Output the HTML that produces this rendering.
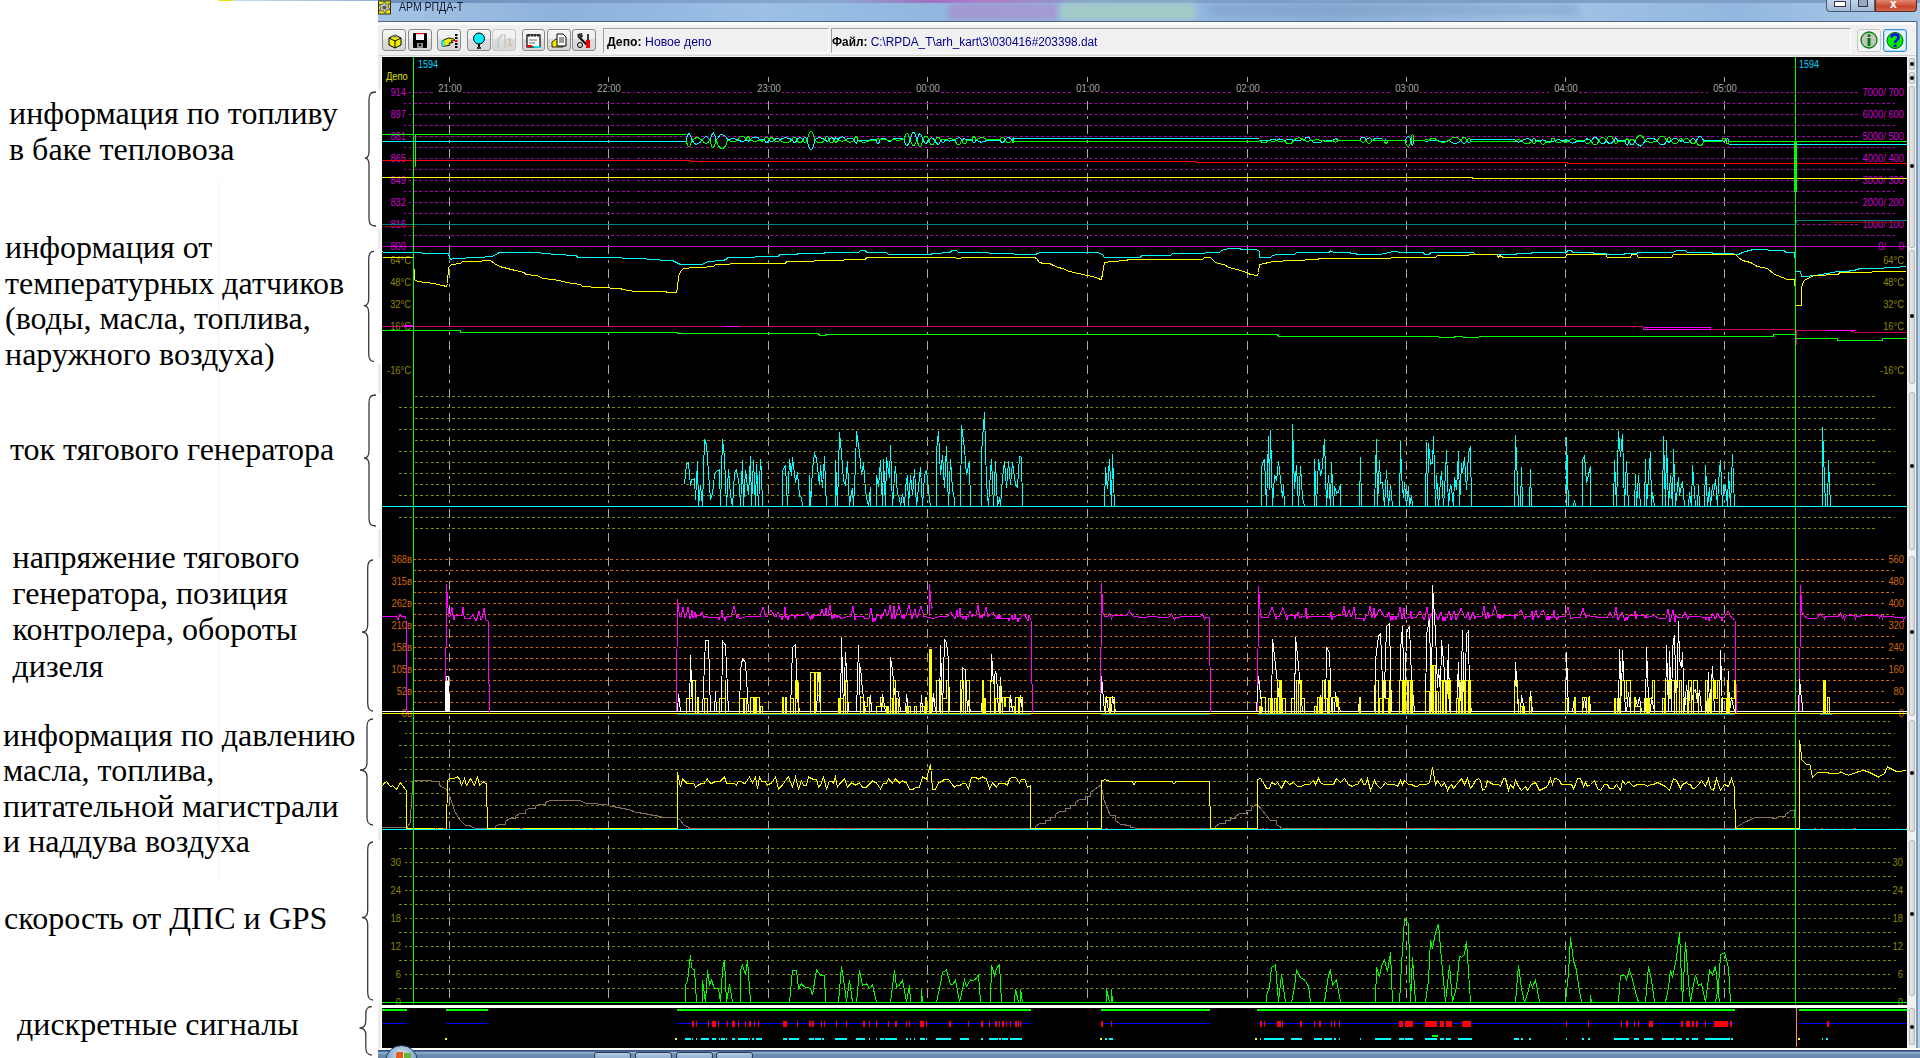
<!DOCTYPE html>
<html><head><meta charset="utf-8"><style>
html,body{margin:0;padding:0;width:1920px;height:1058px;overflow:hidden;background:#fff;position:relative}
.ann{position:absolute;font-family:"Liberation Serif",serif;font-size:32px;line-height:1;white-space:nowrap;color:#000}
</style></head><body>
<div style="position:absolute;left:233px;top:0;width:145px;height:1px;background:linear-gradient(90deg,#c8dcf0,#8fb0d8)"></div>
<div style="position:absolute;left:219px;top:0;width:14px;height:1px;background:#e8e000"></div>
<div style="position:absolute;left:218px;top:180px;width:1px;height:700px;background:#f4f4f4"></div><div id="title" style="position:absolute;left:378px;top:0;width:1542px;height:21px;overflow:hidden;
background:linear-gradient(90deg,#a6c3e3 0%,#8db3dc 12%,#9cc0e6 25%,#8fb6de 38%,#95bbe2 50%,#8cb1d8 62%,#a3c4e6 75%,#92b8df 88%,#a9c8e8 100%)">
<div style="position:absolute;left:0;top:0;width:100%;height:3px;background:linear-gradient(90deg,#6d90bb,#88a8d0 30%,#a070c0 36%,#b07ac8 40%,#7fa0c8 46%,#7d9ec6 100%)"></div>
<div style="position:absolute;left:570px;top:3px;width:110px;height:17px;background:#a892d0;filter:blur(3px);opacity:.8"></div>
<div style="position:absolute;left:682px;top:3px;width:135px;height:17px;background:#a8cfc0;filter:blur(3px);opacity:.8"></div>
<div style="position:absolute;left:830px;top:5px;width:370px;height:10px;background:#6f8fb8;filter:blur(4px);opacity:.45"></div>
</div><svg style="position:absolute;left:378px;top:0" width="14" height="15"><rect x="0.5" y="1" width="12" height="13" fill="#f0e800" stroke="#303010" stroke-width="1"/><path d="M6.5,1.5 L8,4.5 11.5,3.5 10,7 12,9.5 8.5,10 7,13.5 5,10.5 1.5,11 3,7.5 1,4.5 4.5,4.5Z" fill="#c8c8c8" stroke="#404040" stroke-width="0.8"/><circle cx="6.5" cy="7.5" r="2" fill="#555"/></svg>
<div style="position:absolute;left:399px;top:0px;font:12px 'Liberation Sans',sans-serif;color:#101830;line-height:14px;transform:scaleX(0.875);transform-origin:0 0">АРМ РПДА-Т</div><div style="position:absolute;left:1826px;top:0;width:25px;height:12px;background:linear-gradient(#c4d6ea,#9fb8d4);border:1px solid #4a5c74;border-top:none;border-radius:0 0 0 4px;box-sizing:border-box"></div>
<div style="position:absolute;left:1834px;top:1px;width:10px;height:4px;background:#fff;border:1px solid #334"></div>
<div style="position:absolute;left:1851px;top:0;width:24px;height:12px;background:linear-gradient(#c4d6ea,#9fb8d4);border:1px solid #4a5c74;border-top:none;border-left:none;box-sizing:border-box"></div>
<div style="position:absolute;left:1858px;top:-2px;width:8px;height:7px;background:#9ab;border:1px solid #334"></div>
<div style="position:absolute;left:1875px;top:0;width:42px;height:12px;background:linear-gradient(#e08870,#c8442c 60%,#d06850);border:1px solid #5a2a20;border-top:none;border-radius:0 0 4px 0;box-sizing:border-box"></div>
<div style="position:absolute;left:1890px;top:-3px;font:bold 12px 'Liberation Sans',sans-serif;color:#fff">x</div><div style="position:absolute;left:378px;top:21px;width:1539px;height:1px;background:#4e627a"></div>
<div style="position:absolute;left:378px;top:22px;width:1538px;height:1029px;background:#f0f0f0"></div>
<div style="position:absolute;left:378px;top:22px;width:1538px;height:3px;background:#fbfbfb"></div>
<div style="position:absolute;left:1916px;top:21px;width:2px;height:1030px;background:#8098b4"></div>
<div style="position:absolute;left:1918px;top:21px;width:2px;height:1030px;background:#b8d0ec"></div>
<div style="position:absolute;left:378px;top:55px;width:1538px;height:1px;background:#d0d0d0"></div><div style="position:absolute;left:382px;top:29px;width:24px;height:22px;box-sizing:border-box;border:1px solid #8a8a8a;border-radius:3px;background:linear-gradient(#f4f4f4 0%,#eeeeee 46%,#dddddd 47%,#d6d6d6 100%)"></div><div style="position:absolute;left:408px;top:29px;width:24px;height:22px;box-sizing:border-box;border:1px solid #8a8a8a;border-radius:3px;background:linear-gradient(#f4f4f4 0%,#eeeeee 46%,#dddddd 47%,#d6d6d6 100%)"></div><div style="position:absolute;left:437px;top:29px;width:24px;height:22px;box-sizing:border-box;border:1px solid #8a8a8a;border-radius:3px;background:linear-gradient(#f4f4f4 0%,#eeeeee 46%,#dddddd 47%,#d6d6d6 100%)"></div><div style="position:absolute;left:467px;top:29px;width:24px;height:22px;box-sizing:border-box;border:1px solid #8a8a8a;border-radius:3px;background:linear-gradient(#f4f4f4 0%,#eeeeee 46%,#dddddd 47%,#d6d6d6 100%)"></div><div style="position:absolute;left:492px;top:29px;width:24px;height:22px;box-sizing:border-box;border:1px solid #c8c8c8;border-radius:3px;background:linear-gradient(#f4f4f4 0%,#eeeeee 46%,#dddddd 47%,#d6d6d6 100%)"></div><div style="position:absolute;left:522px;top:29px;width:23px;height:22px;box-sizing:border-box;border:1px solid #8a8a8a;border-radius:3px;background:linear-gradient(#f4f4f4 0%,#eeeeee 46%,#dddddd 47%,#d6d6d6 100%)"></div><div style="position:absolute;left:547px;top:29px;width:24px;height:22px;box-sizing:border-box;border:1px solid #8a8a8a;border-radius:3px;background:linear-gradient(#f4f4f4 0%,#eeeeee 46%,#dddddd 47%,#d6d6d6 100%)"></div><div style="position:absolute;left:572px;top:29px;width:24px;height:22px;box-sizing:border-box;border:1px solid #8a8a8a;border-radius:3px;background:linear-gradient(#f4f4f4 0%,#eeeeee 46%,#dddddd 47%,#d6d6d6 100%)"></div><div style="position:absolute;left:1857px;top:29px;width:24px;height:23px;box-sizing:border-box;border:1px solid #c8c8c8;border-radius:3px;background:#f4f4f4"></div><div style="position:absolute;left:1883px;top:29px;width:24px;height:23px;box-sizing:border-box;border:1px solid #3c8cd8;border-radius:3px;background:#e4f2fc;box-shadow:inset 0 0 0 1px #a8dcf8"></div>
<svg style="position:absolute;left:0;top:0" width="1920" height="60">
<g transform="translate(387,32)"><path d="M2,6 L8,3 L14,6 L14,13 L8,16 L2,13Z" fill="#f0f000" stroke="#000" stroke-width="1"/><path d="M2,6 L8,9 L14,6 M8,9 V16" fill="none" stroke="#000"/><path d="M5,4.5 L8,3 11,4.5 8,6Z" fill="#888"/></g>
<g transform="translate(412,32)"><rect x="1" y="1" width="14" height="15" rx="1" fill="#000"/><rect x="4" y="1" width="8" height="7" fill="#fff"/><rect x="4" y="1" width="8" height="1.2" fill="#e00"/><rect x="5" y="11" width="6" height="5" fill="#888"/><rect x="7" y="12" width="2" height="2" fill="#000"/></g>
<g transform="translate(441,33)"><path d="M1,8 L5,6 8,5 13,6 14,7.5 10,8 12,9.5 8,10 9,12 5,13 1,13Z" fill="#f0f000" stroke="#000" stroke-width="0.9"/><rect x="0.5" y="7.5" width="3" height="5.5" fill="#30e0f0"/><rect x="14" y="1" width="2.5" height="2" fill="#000"/><rect x="14" y="4" width="2.5" height="2" fill="#000"/><rect x="14" y="7" width="2.5" height="2" fill="#f00"/><rect x="14" y="10" width="2.5" height="2" fill="#000"/><rect x="14" y="13" width="2.5" height="2" fill="#000"/></g>
<g transform="translate(472,32)"><circle cx="7" cy="6.5" r="5.5" fill="#00f0ff" stroke="#000" stroke-width="1"/><rect x="6" y="12" width="2" height="3" fill="#000"/><rect x="5" y="15" width="4" height="2" fill="#333"/></g>
<g transform="translate(497,33)"><path d="M1,15 V5 h3 V2 h4 V15" fill="none" stroke="#c0c0c0" stroke-width="1.2"/><text x="10" y="13" font-size="10" font-family="Liberation Sans" fill="#d0c0a8" font-weight="bold">1</text></g>
<g transform="translate(526,32)"><rect x="1" y="3" width="13" height="12" fill="#fff" stroke="#000" stroke-width="1.2"/><path d="M3,2v3M6,2v3M9,2v3M12,2v3" stroke="#000"/><path d="M3,8h8M3,11h6" stroke="#666"/><rect x="1" y="13" width="5" height="2" fill="#e00"/><rect x="8" y="14" width="6" height="2" fill="#0dd"/></g>
<g transform="translate(551,32)"><path d="M1,10 L5,7 h10 l-3,8 h-11z" fill="#f0f000" stroke="#000" stroke-width="0.8"/><path d="M6,2 h6 l3,3 v9 h-9z" fill="#fff" stroke="#000" stroke-width="1"/><path d="M8,6h5M8,8h5M8,10h5" stroke="#000" stroke-width="0.8"/></g>
<g transform="translate(576,32)"><path d="M2,4 L12,14" stroke="#000" stroke-width="2"/><path d="M1,2 l5,-1 1,4 -4,2z" fill="#333"/><rect x="10" y="8" width="4" height="8" fill="#e00"/><path d="M12,2v6" stroke="#000" stroke-width="1.5"/><circle cx="4" cy="13" r="2.5" fill="none" stroke="#000"/></g>
<g transform="translate(1860,31)"><circle cx="9" cy="9" r="8" fill="#c4c4c4" stroke="#008000" stroke-width="1.3"/><rect x="7.5" y="7" width="3" height="8" fill="#008000"/><circle cx="9" cy="4.5" r="1.6" fill="#008000"/></g>
<g transform="translate(1886,31)"><circle cx="9" cy="9.5" r="8" fill="#00f000" stroke="#006000" stroke-width="1"/><path d="M5.5,6.5 C5.5,2.5 12.5,2.5 12.5,6.5 C12.5,9 9,9 9,12" fill="none" stroke="#0000ff" stroke-width="2.5"/><rect x="7.5" y="13.5" width="3" height="2.5" fill="#0000ff"/></g>
</svg><div style="position:absolute;left:603px;top:28px;width:226px;height:25px;box-sizing:border-box;border-top:1px solid #a0a0a0;border-left:1px solid #a0a0a0;border-bottom:1px solid #fff;border-right:1px solid #fff"></div>
<div style="position:absolute;left:831px;top:28px;width:1020px;height:25px;box-sizing:border-box;border-top:1px solid #a0a0a0;border-left:1px solid #a0a0a0;border-bottom:1px solid #fff;border-right:1px solid #fff"></div>
<div style="position:absolute;left:607px;top:35px;font:12px 'Liberation Sans',sans-serif;line-height:14px;white-space:nowrap;transform:scaleX(1.02);transform-origin:0 0"><b style="color:#000">Депо:</b> <span style="color:#000090">Новое депо</span></div>
<div style="position:absolute;left:832px;top:35px;font:12px 'Liberation Sans',sans-serif;line-height:14px;white-space:nowrap;transform:scaleX(0.985);transform-origin:0 0"><b style="color:#000">Файл:</b> <span style="color:#000090">C:\RPDA_T\arh_kart\3\030416#203398.dat</span></div><svg style="position:absolute;left:0;top:0" width="1920" height="1058" shape-rendering="crispEdges">
<rect x="382" y="57" width="1525" height="991" fill="#000"/>
<g font-family="Liberation Sans" ><line x1="449.5" y1="77" x2="449.5" y2="1003" stroke="#a8a8a8" stroke-dasharray="9 6 3 6" stroke-dashoffset="0"/><line x1="608.5" y1="77" x2="608.5" y2="1003" stroke="#a8a8a8" stroke-dasharray="9 6 3 6" stroke-dashoffset="0"/><line x1="768.5" y1="77" x2="768.5" y2="1003" stroke="#a8a8a8" stroke-dasharray="9 6 3 6" stroke-dashoffset="0"/><line x1="927.5" y1="77" x2="927.5" y2="1003" stroke="#a8a8a8" stroke-dasharray="9 6 3 6" stroke-dashoffset="0"/><line x1="1087.5" y1="77" x2="1087.5" y2="1003" stroke="#a8a8a8" stroke-dasharray="9 6 3 6" stroke-dashoffset="0"/><line x1="1247.5" y1="77" x2="1247.5" y2="1003" stroke="#a8a8a8" stroke-dasharray="9 6 3 6" stroke-dashoffset="0"/><line x1="1406.5" y1="77" x2="1406.5" y2="1003" stroke="#a8a8a8" stroke-dasharray="9 6 3 6" stroke-dashoffset="0"/><line x1="1565.5" y1="77" x2="1565.5" y2="1003" stroke="#a8a8a8" stroke-dasharray="9 6 3 6" stroke-dashoffset="0"/><line x1="1724.5" y1="77" x2="1724.5" y2="1003" stroke="#a8a8a8" stroke-dasharray="9 6 3 6" stroke-dashoffset="0"/><line x1="409" y1="92.5" x2="1859" y2="92.5" stroke="#b000b8" stroke-dasharray="1.9938 2.9906 2.9906 1.9938 2.9906 2.9906" stroke-dashoffset="15.750"/><line x1="404" y1="103.5" x2="1895" y2="103.5" stroke="#b000b8" stroke-dasharray="1.9938 2.9906 2.9906 1.9938 2.9906 2.9906" stroke-dashoffset="10.750"/><line x1="409" y1="114.5" x2="1859" y2="114.5" stroke="#b000b8" stroke-dasharray="1.9938 2.9906 2.9906 1.9938 2.9906 2.9906" stroke-dashoffset="15.750"/><line x1="404" y1="125.5" x2="1895" y2="125.5" stroke="#b000b8" stroke-dasharray="1.9938 2.9906 2.9906 1.9938 2.9906 2.9906" stroke-dashoffset="10.750"/><line x1="409" y1="136.5" x2="1859" y2="136.5" stroke="#b000b8" stroke-dasharray="1.9938 2.9906 2.9906 1.9938 2.9906 2.9906" stroke-dashoffset="15.750"/><line x1="404" y1="147.5" x2="1895" y2="147.5" stroke="#b000b8" stroke-dasharray="1.9938 2.9906 2.9906 1.9938 2.9906 2.9906" stroke-dashoffset="10.750"/><line x1="409" y1="158.5" x2="1859" y2="158.5" stroke="#b000b8" stroke-dasharray="1.9938 2.9906 2.9906 1.9938 2.9906 2.9906" stroke-dashoffset="15.750"/><line x1="404" y1="169.5" x2="1895" y2="169.5" stroke="#b000b8" stroke-dasharray="1.9938 2.9906 2.9906 1.9938 2.9906 2.9906" stroke-dashoffset="10.750"/><line x1="409" y1="180.5" x2="1859" y2="180.5" stroke="#b000b8" stroke-dasharray="1.9938 2.9906 2.9906 1.9938 2.9906 2.9906" stroke-dashoffset="15.750"/><line x1="404" y1="191.5" x2="1895" y2="191.5" stroke="#b000b8" stroke-dasharray="1.9938 2.9906 2.9906 1.9938 2.9906 2.9906" stroke-dashoffset="10.750"/><line x1="409" y1="202.5" x2="1859" y2="202.5" stroke="#b000b8" stroke-dasharray="1.9938 2.9906 2.9906 1.9938 2.9906 2.9906" stroke-dashoffset="15.750"/><line x1="404" y1="213.5" x2="1895" y2="213.5" stroke="#b000b8" stroke-dasharray="1.9938 2.9906 2.9906 1.9938 2.9906 2.9906" stroke-dashoffset="10.750"/><line x1="409" y1="224.5" x2="1859" y2="224.5" stroke="#b000b8" stroke-dasharray="1.9938 2.9906 2.9906 1.9938 2.9906 2.9906" stroke-dashoffset="15.750"/><line x1="404" y1="235.5" x2="1895" y2="235.5" stroke="#b000b8" stroke-dasharray="1.9938 2.9906 2.9906 1.9938 2.9906 2.9906" stroke-dashoffset="10.750"/><rect x="382" y="246" width="1525" height="1" fill="#b000b8"/><line x1="415" y1="396.5" x2="1877" y2="396.5" stroke="#8c8800" stroke-dasharray="1.9938 2.9906 2.9906 1.9938 2.9906 2.9906" stroke-dashoffset="4.800"/><line x1="399" y1="407.5" x2="1895" y2="407.5" stroke="#8c8800" stroke-dasharray="1.9938 2.9906 2.9906 1.9938 2.9906 2.9906" stroke-dashoffset="4.750"/><line x1="415" y1="418.5" x2="1877" y2="418.5" stroke="#8c8800" stroke-dasharray="1.9938 2.9906 2.9906 1.9938 2.9906 2.9906" stroke-dashoffset="4.800"/><line x1="399" y1="429.5" x2="1895" y2="429.5" stroke="#8c8800" stroke-dasharray="1.9938 2.9906 2.9906 1.9938 2.9906 2.9906" stroke-dashoffset="4.750"/><line x1="415" y1="440.5" x2="1877" y2="440.5" stroke="#8c8800" stroke-dasharray="1.9938 2.9906 2.9906 1.9938 2.9906 2.9906" stroke-dashoffset="4.800"/><line x1="399" y1="451.5" x2="1895" y2="451.5" stroke="#8c8800" stroke-dasharray="1.9938 2.9906 2.9906 1.9938 2.9906 2.9906" stroke-dashoffset="4.750"/><line x1="415" y1="462.5" x2="1877" y2="462.5" stroke="#8c8800" stroke-dasharray="1.9938 2.9906 2.9906 1.9938 2.9906 2.9906" stroke-dashoffset="4.800"/><line x1="399" y1="473.5" x2="1895" y2="473.5" stroke="#8c8800" stroke-dasharray="1.9938 2.9906 2.9906 1.9938 2.9906 2.9906" stroke-dashoffset="4.750"/><line x1="415" y1="484.5" x2="1877" y2="484.5" stroke="#8c8800" stroke-dasharray="1.9938 2.9906 2.9906 1.9938 2.9906 2.9906" stroke-dashoffset="4.800"/><line x1="399" y1="495.5" x2="1895" y2="495.5" stroke="#8c8800" stroke-dasharray="1.9938 2.9906 2.9906 1.9938 2.9906 2.9906" stroke-dashoffset="4.750"/><line x1="399" y1="517.5" x2="1895" y2="517.5" stroke="#8c8800" stroke-dasharray="1.9938 2.9906 2.9906 1.9938 2.9906 2.9906" stroke-dashoffset="4.750"/><line x1="415" y1="528.5" x2="1877" y2="528.5" stroke="#8c8800" stroke-dasharray="1.9938 2.9906 2.9906 1.9938 2.9906 2.9906" stroke-dashoffset="4.800"/><line x1="414" y1="559.5" x2="1884" y2="559.5" stroke="#d06800" stroke-dasharray="1.9938 2.9906 2.9906 1.9938 2.9906 2.9906" stroke-dashoffset="5.800"/><line x1="414" y1="570.5" x2="1894" y2="570.5" stroke="#d06800" stroke-dasharray="1.9938 2.9906 2.9906 1.9938 2.9906 2.9906" stroke-dashoffset="5.800"/><line x1="414" y1="581.5" x2="1884" y2="581.5" stroke="#d06800" stroke-dasharray="1.9938 2.9906 2.9906 1.9938 2.9906 2.9906" stroke-dashoffset="5.800"/><line x1="414" y1="592.5" x2="1894" y2="592.5" stroke="#d06800" stroke-dasharray="1.9938 2.9906 2.9906 1.9938 2.9906 2.9906" stroke-dashoffset="5.800"/><line x1="414" y1="603.5" x2="1884" y2="603.5" stroke="#d06800" stroke-dasharray="1.9938 2.9906 2.9906 1.9938 2.9906 2.9906" stroke-dashoffset="5.800"/><line x1="414" y1="614.5" x2="1894" y2="614.5" stroke="#d06800" stroke-dasharray="1.9938 2.9906 2.9906 1.9938 2.9906 2.9906" stroke-dashoffset="5.800"/><line x1="414" y1="625.5" x2="1884" y2="625.5" stroke="#d06800" stroke-dasharray="1.9938 2.9906 2.9906 1.9938 2.9906 2.9906" stroke-dashoffset="5.800"/><line x1="414" y1="636.5" x2="1894" y2="636.5" stroke="#d06800" stroke-dasharray="1.9938 2.9906 2.9906 1.9938 2.9906 2.9906" stroke-dashoffset="5.800"/><line x1="414" y1="647.5" x2="1884" y2="647.5" stroke="#d06800" stroke-dasharray="1.9938 2.9906 2.9906 1.9938 2.9906 2.9906" stroke-dashoffset="5.800"/><line x1="414" y1="658.5" x2="1894" y2="658.5" stroke="#d06800" stroke-dasharray="1.9938 2.9906 2.9906 1.9938 2.9906 2.9906" stroke-dashoffset="5.800"/><line x1="414" y1="669.5" x2="1884" y2="669.5" stroke="#d06800" stroke-dasharray="1.9938 2.9906 2.9906 1.9938 2.9906 2.9906" stroke-dashoffset="5.800"/><line x1="414" y1="680.5" x2="1894" y2="680.5" stroke="#d06800" stroke-dasharray="1.9938 2.9906 2.9906 1.9938 2.9906 2.9906" stroke-dashoffset="5.800"/><line x1="414" y1="691.5" x2="1884" y2="691.5" stroke="#d06800" stroke-dasharray="1.9938 2.9906 2.9906 1.9938 2.9906 2.9906" stroke-dashoffset="5.800"/><line x1="414" y1="702.5" x2="1894" y2="702.5" stroke="#d06800" stroke-dasharray="1.9938 2.9906 2.9906 1.9938 2.9906 2.9906" stroke-dashoffset="5.800"/><line x1="399" y1="721.5" x2="1890" y2="721.5" stroke="#8c8800" stroke-dasharray="1.9938 2.9906 2.9906 1.9938 2.9906 2.9906" stroke-dashoffset="4.750"/><line x1="405" y1="733.5" x2="1895" y2="733.5" stroke="#8c8800" stroke-dasharray="1.9938 2.9906 2.9906 1.9938 2.9906 2.9906" stroke-dashoffset="10.750"/><line x1="399" y1="745.5" x2="1890" y2="745.5" stroke="#8c8800" stroke-dasharray="1.9938 2.9906 2.9906 1.9938 2.9906 2.9906" stroke-dashoffset="4.750"/><line x1="405" y1="757.5" x2="1895" y2="757.5" stroke="#8c8800" stroke-dasharray="1.9938 2.9906 2.9906 1.9938 2.9906 2.9906" stroke-dashoffset="10.750"/><line x1="399" y1="769.5" x2="1890" y2="769.5" stroke="#8c8800" stroke-dasharray="1.9938 2.9906 2.9906 1.9938 2.9906 2.9906" stroke-dashoffset="4.750"/><line x1="405" y1="781.5" x2="1895" y2="781.5" stroke="#8c8800" stroke-dasharray="1.9938 2.9906 2.9906 1.9938 2.9906 2.9906" stroke-dashoffset="10.750"/><line x1="399" y1="793.5" x2="1890" y2="793.5" stroke="#8c8800" stroke-dasharray="1.9938 2.9906 2.9906 1.9938 2.9906 2.9906" stroke-dashoffset="4.750"/><line x1="405" y1="805.5" x2="1895" y2="805.5" stroke="#8c8800" stroke-dasharray="1.9938 2.9906 2.9906 1.9938 2.9906 2.9906" stroke-dashoffset="10.750"/><line x1="399" y1="817.5" x2="1890" y2="817.5" stroke="#8c8800" stroke-dasharray="1.9938 2.9906 2.9906 1.9938 2.9906 2.9906" stroke-dashoffset="4.750"/><line x1="399" y1="848.5" x2="1897" y2="848.5" stroke="#8c8800" stroke-dasharray="1.9938 2.9906 2.9906 1.9938 2.9906 2.9906" stroke-dashoffset="4.750"/><line x1="405" y1="862.5" x2="1890" y2="862.5" stroke="#8c8800" stroke-dasharray="1.9938 2.9906 2.9906 1.9938 2.9906 2.9906" stroke-dashoffset="10.750"/><line x1="399" y1="876.5" x2="1897" y2="876.5" stroke="#8c8800" stroke-dasharray="1.9938 2.9906 2.9906 1.9938 2.9906 2.9906" stroke-dashoffset="4.750"/><line x1="405" y1="890.5" x2="1890" y2="890.5" stroke="#8c8800" stroke-dasharray="1.9938 2.9906 2.9906 1.9938 2.9906 2.9906" stroke-dashoffset="10.750"/><line x1="399" y1="904.5" x2="1897" y2="904.5" stroke="#8c8800" stroke-dasharray="1.9938 2.9906 2.9906 1.9938 2.9906 2.9906" stroke-dashoffset="4.750"/><line x1="405" y1="918.5" x2="1890" y2="918.5" stroke="#8c8800" stroke-dasharray="1.9938 2.9906 2.9906 1.9938 2.9906 2.9906" stroke-dashoffset="10.750"/><line x1="399" y1="932.5" x2="1897" y2="932.5" stroke="#8c8800" stroke-dasharray="1.9938 2.9906 2.9906 1.9938 2.9906 2.9906" stroke-dashoffset="4.750"/><line x1="405" y1="946.5" x2="1890" y2="946.5" stroke="#8c8800" stroke-dasharray="1.9938 2.9906 2.9906 1.9938 2.9906 2.9906" stroke-dashoffset="10.750"/><line x1="399" y1="960.5" x2="1897" y2="960.5" stroke="#8c8800" stroke-dasharray="1.9938 2.9906 2.9906 1.9938 2.9906 2.9906" stroke-dashoffset="4.750"/><line x1="405" y1="974.5" x2="1890" y2="974.5" stroke="#8c8800" stroke-dasharray="1.9938 2.9906 2.9906 1.9938 2.9906 2.9906" stroke-dashoffset="10.750"/><line x1="399" y1="988.5" x2="1897" y2="988.5" stroke="#8c8800" stroke-dasharray="1.9938 2.9906 2.9906 1.9938 2.9906 2.9906" stroke-dashoffset="4.750"/><rect x="433" y="82" width="30" height="17" fill="#000"/><text transform="translate(450,92) scale(0.85,1)" fill="#a8a8a8" text-anchor="middle" font-size="11">21:00</text><rect x="592" y="82" width="30" height="17" fill="#000"/><text transform="translate(609,92) scale(0.85,1)" fill="#a8a8a8" text-anchor="middle" font-size="11">22:00</text><rect x="752" y="82" width="30" height="17" fill="#000"/><text transform="translate(769,92) scale(0.85,1)" fill="#a8a8a8" text-anchor="middle" font-size="11">23:00</text><rect x="911" y="82" width="30" height="17" fill="#000"/><text transform="translate(928,92) scale(0.85,1)" fill="#a8a8a8" text-anchor="middle" font-size="11">00:00</text><rect x="1071" y="82" width="30" height="17" fill="#000"/><text transform="translate(1088,92) scale(0.85,1)" fill="#a8a8a8" text-anchor="middle" font-size="11">01:00</text><rect x="1231" y="82" width="30" height="17" fill="#000"/><text transform="translate(1248,92) scale(0.85,1)" fill="#a8a8a8" text-anchor="middle" font-size="11">02:00</text><rect x="1390" y="82" width="30" height="17" fill="#000"/><text transform="translate(1407,92) scale(0.85,1)" fill="#a8a8a8" text-anchor="middle" font-size="11">03:00</text><rect x="1549" y="82" width="30" height="17" fill="#000"/><text transform="translate(1566,92) scale(0.85,1)" fill="#a8a8a8" text-anchor="middle" font-size="11">04:00</text><rect x="1708" y="82" width="30" height="17" fill="#000"/><text transform="translate(1725,92) scale(0.85,1)" fill="#a8a8a8" text-anchor="middle" font-size="11">05:00</text><text transform="translate(386,80) scale(0.85,1)" fill="#e0e000" text-anchor="start" font-size="11">Депо</text><text transform="translate(418,68) scale(0.9,1)" fill="#00d8ff" text-anchor="start" font-size="10">1594</text><text transform="translate(1799,68) scale(0.9,1)" fill="#00d8ff" text-anchor="start" font-size="10">1594</text><text transform="translate(406,96) scale(0.85,1)" fill="#d000d0" text-anchor="end" font-size="11">914</text><text transform="translate(406,118) scale(0.85,1)" fill="#d000d0" text-anchor="end" font-size="11">897</text><text transform="translate(406,140) scale(0.85,1)" fill="#d000d0" text-anchor="end" font-size="11">881</text><text transform="translate(406,162) scale(0.85,1)" fill="#d000d0" text-anchor="end" font-size="11">865</text><text transform="translate(406,184) scale(0.85,1)" fill="#d000d0" text-anchor="end" font-size="11">849</text><text transform="translate(406,206) scale(0.85,1)" fill="#d000d0" text-anchor="end" font-size="11">832</text><text transform="translate(406,228) scale(0.85,1)" fill="#d000d0" text-anchor="end" font-size="11">816</text><text transform="translate(406,250) scale(0.85,1)" fill="#d000d0" text-anchor="end" font-size="11">800</text><text transform="translate(1904,96) scale(0.85,1)" fill="#d000d0" text-anchor="end" font-size="11">7000/ 700</text><text transform="translate(1904,118) scale(0.85,1)" fill="#d000d0" text-anchor="end" font-size="11">6000/ 600</text><text transform="translate(1904,140) scale(0.85,1)" fill="#d000d0" text-anchor="end" font-size="11">5000/ 500</text><text transform="translate(1904,162) scale(0.85,1)" fill="#d000d0" text-anchor="end" font-size="11">4000/ 400</text><text transform="translate(1904,184) scale(0.85,1)" fill="#d000d0" text-anchor="end" font-size="11">3000/ 300</text><text transform="translate(1904,206) scale(0.85,1)" fill="#d000d0" text-anchor="end" font-size="11">2000/ 200</text><text transform="translate(1904,228) scale(0.85,1)" fill="#d000d0" text-anchor="end" font-size="11">1000/ 100</text><text transform="translate(1904,250) scale(0.85,1)" fill="#d000d0" text-anchor="end" font-size="11">0</text><text transform="translate(1886,250) scale(0.85,1)" fill="#d000d0" text-anchor="end" font-size="11">0/</text><text transform="translate(411,264) scale(0.85,1)" fill="#8c8800" text-anchor="end" font-size="11">64°C</text><text transform="translate(1904,264) scale(0.85,1)" fill="#8c8800" text-anchor="end" font-size="11">64°C</text><text transform="translate(411,286) scale(0.85,1)" fill="#8c8800" text-anchor="end" font-size="11">48°C</text><text transform="translate(1904,286) scale(0.85,1)" fill="#8c8800" text-anchor="end" font-size="11">48°C</text><text transform="translate(411,308) scale(0.85,1)" fill="#8c8800" text-anchor="end" font-size="11">32°C</text><text transform="translate(1904,308) scale(0.85,1)" fill="#8c8800" text-anchor="end" font-size="11">32°C</text><text transform="translate(411,330) scale(0.85,1)" fill="#8c8800" text-anchor="end" font-size="11">16°C</text><text transform="translate(1904,330) scale(0.85,1)" fill="#8c8800" text-anchor="end" font-size="11">16°C</text><text transform="translate(411,374) scale(0.85,1)" fill="#8c8800" text-anchor="end" font-size="11">-16°C</text><text transform="translate(1904,374) scale(0.85,1)" fill="#8c8800" text-anchor="end" font-size="11">-16°C</text><text transform="translate(412,563) scale(0.85,1)" fill="#d06800" text-anchor="end" font-size="11">368в</text><text transform="translate(1904,563) scale(0.85,1)" fill="#d06800" text-anchor="end" font-size="11">560</text><text transform="translate(412,585) scale(0.85,1)" fill="#d06800" text-anchor="end" font-size="11">315в</text><text transform="translate(1904,585) scale(0.85,1)" fill="#d06800" text-anchor="end" font-size="11">480</text><text transform="translate(412,607) scale(0.85,1)" fill="#d06800" text-anchor="end" font-size="11">262в</text><text transform="translate(1904,607) scale(0.85,1)" fill="#d06800" text-anchor="end" font-size="11">400</text><text transform="translate(412,629) scale(0.85,1)" fill="#d06800" text-anchor="end" font-size="11">210в</text><text transform="translate(1904,629) scale(0.85,1)" fill="#d06800" text-anchor="end" font-size="11">320</text><text transform="translate(412,651) scale(0.85,1)" fill="#d06800" text-anchor="end" font-size="11">158в</text><text transform="translate(1904,651) scale(0.85,1)" fill="#d06800" text-anchor="end" font-size="11">240</text><text transform="translate(412,673) scale(0.85,1)" fill="#d06800" text-anchor="end" font-size="11">105в</text><text transform="translate(1904,673) scale(0.85,1)" fill="#d06800" text-anchor="end" font-size="11">160</text><text transform="translate(412,695) scale(0.85,1)" fill="#d06800" text-anchor="end" font-size="11">52в</text><text transform="translate(1904,695) scale(0.85,1)" fill="#d06800" text-anchor="end" font-size="11">80</text><text transform="translate(412,717) scale(0.85,1)" fill="#d06800" text-anchor="end" font-size="11">0в</text><text transform="translate(1904,717) scale(0.85,1)" fill="#d06800" text-anchor="end" font-size="11">0</text><text transform="translate(401,866) scale(0.85,1)" fill="#8c8800" text-anchor="end" font-size="11">30</text><text transform="translate(1903,866) scale(0.85,1)" fill="#8c8800" text-anchor="end" font-size="11">30</text><text transform="translate(401,894) scale(0.85,1)" fill="#8c8800" text-anchor="end" font-size="11">24</text><text transform="translate(1903,894) scale(0.85,1)" fill="#8c8800" text-anchor="end" font-size="11">24</text><text transform="translate(401,922) scale(0.85,1)" fill="#8c8800" text-anchor="end" font-size="11">18</text><text transform="translate(1903,922) scale(0.85,1)" fill="#8c8800" text-anchor="end" font-size="11">18</text><text transform="translate(401,950) scale(0.85,1)" fill="#8c8800" text-anchor="end" font-size="11">12</text><text transform="translate(1903,950) scale(0.85,1)" fill="#8c8800" text-anchor="end" font-size="11">12</text><text transform="translate(401,978) scale(0.85,1)" fill="#8c8800" text-anchor="end" font-size="11">6</text><text transform="translate(1903,978) scale(0.85,1)" fill="#8c8800" text-anchor="end" font-size="11">6</text><text transform="translate(401,1006) scale(0.85,1)" fill="#8c8800" text-anchor="end" font-size="11">0</text><text transform="translate(1903,1006) scale(0.85,1)" fill="#8c8800" text-anchor="end" font-size="11">0</text></g>
<g shape-rendering="crispEdges"><rect x="382" y="506" width="1525" height="1" fill="#00ffff"/><polyline points="684.5,483.8 686.5,463.8 688.5,462.5 690.5,486.2 691.5,480.0 694.5,478.8 695.5,500.0 697.5,461.2 698.5,506.5 700.5,485.0 702.5,506.5 704.5,438.8 706.5,445.0 708.5,472.5 710.5,500.0 712.5,493.9 714.5,475.0 716.5,471.2 719.5,470.0 720.5,506.5 722.5,438.8 724.5,457.5 726.5,506.5 728.5,468.8 730.5,495.0 732.5,506.5 734.5,472.5 736.5,470.0 739.5,486.2 740.5,506.5 742.5,460.0 743.5,506.5 745.5,470.0 748.5,495.0 750.5,456.2 751.5,506.5 753.5,460.0 755.5,506.5 756.5,463.8 758.5,506.5 760.5,458.8 761.5,472.5 762.5,506.2" fill="none" stroke="#00ffff" stroke-width="1" stroke-linejoin="miter" /><polyline points="782.5,506.2 782.5,471.2 785.5,465.0 787.5,506.5 789.5,458.8 791.5,475.6 792.5,457.5 795.5,482.5 797.5,472.5 799.5,496.2 801.5,497.5 802.5,506.2" fill="none" stroke="#00ffff" stroke-width="1" stroke-linejoin="miter" /><polyline points="809.5,506.2 809.5,475.0 810.5,506.5 812.5,468.5 814.5,453.8 816.5,458.8 819.5,485.0 820.5,465.0 822.5,487.6 824.5,456.2 825.5,485.0 826.5,506.2" fill="none" stroke="#00ffff" stroke-width="1" stroke-linejoin="miter" /><polyline points="835.5,506.2 835.5,460.0 837.5,506.5 839.5,432.5 841.5,452.5 843.5,481.0 845.5,485.0 847.5,461.2 849.5,506.2 850.5,498.0 852.5,487.9 853.5,506.5 855.5,465.0 856.5,431.2 859.5,452.5 861.5,475.0 863.5,462.5 865.5,490.3 866.5,497.5 868.5,506.5 870.5,487.5 870.5,506.2" fill="none" stroke="#00ffff" stroke-width="1" stroke-linejoin="miter" /><polyline points="876.5,506.2 876.5,475.0 878.5,486.5 880.5,460.0 882.5,506.5 883.5,458.8 885.5,506.5 886.5,457.5 889.5,477.5 890.5,445.0 892.5,506.5 894.5,476.1 895.5,466.2 897.5,494.5 899.5,497.5 900.5,506.5 902.5,493.8 904.5,506.5 905.5,487.5 907.5,475.0 908.5,506.5 910.5,475.0 912.5,494.7 913.5,483.0 914.5,468.8 916.5,506.5 918.5,487.5 920.5,467.5 922.5,506.5 924.5,475.0 926.5,470.0 929.5,500.0 930.5,506.2" fill="none" stroke="#00ffff" stroke-width="1" stroke-linejoin="miter" /><polyline points="936.5,506.2 936.5,451.2 938.5,431.2 940.5,475.0 942.5,455.0 944.5,487.8 946.5,446.2 948.5,506.5 950.5,458.8 952.5,489.1 954.5,500.0 954.5,506.2 960.5,506.2 961.5,425.0 964.5,448.8 966.5,475.0 969.5,461.2 970.5,506.2 981.5,506.2 981.5,452.5 984.5,412.5 986.5,482.5 988.5,506.5 990.5,471.0 991.5,458.8 993.5,506.5 995.5,461.2 997.5,506.5 999.5,497.5 1000.5,506.5 1002.5,478.3 1004.5,461.2 1006.5,487.8 1008.5,461.2 1010.5,485.0 1012.5,462.5 1015.5,485.0 1017.5,487.0 1019.5,456.2 1021.5,457.5 1022.5,506.2" fill="none" stroke="#00ffff" stroke-width="1" stroke-linejoin="miter" /><polyline points="1104.5,506.2 1105.5,467.5 1107.5,489.0 1109.5,458.8 1111.5,506.5 1112.5,453.8 1114.5,506.2" fill="none" stroke="#00ffff" stroke-width="1" stroke-linejoin="miter" /><polyline points="1261.5,506.2 1261.5,467.5 1264.5,458.8 1266.5,506.5 1268.5,436.2 1269.5,489.8 1270.5,430.0 1272.5,506.5 1274.5,475.0 1276.5,480.8 1278.5,461.2 1280.5,480.0 1282.5,497.5 1283.5,485.0 1284.5,506.2" fill="none" stroke="#00ffff" stroke-width="1" stroke-linejoin="miter" /><polyline points="1292.5,506.2 1292.5,423.8 1294.5,488.5 1296.5,465.0 1298.5,506.5 1300.5,466.2 1302.5,497.5 1304.5,506.2" fill="none" stroke="#00ffff" stroke-width="1" stroke-linejoin="miter" /><polyline points="1314.5,506.2 1314.5,458.8 1316.5,506.5 1318.5,458.8 1320.5,475.0 1321.5,473.5 1322.5,465.0 1324.5,438.8 1326.5,506.5 1328.5,475.0 1330.5,506.5 1331.5,462.5 1333.5,506.5 1334.5,486.2 1336.5,493.1 1338.5,492.0 1340.5,483.8 1340.5,506.2" fill="none" stroke="#00ffff" stroke-width="1" stroke-linejoin="miter" /><polyline points="1359.5,506.2 1360.5,457.5 1361.5,506.2" fill="none" stroke="#00ffff" stroke-width="1" stroke-linejoin="miter" /><polyline points="1374.5,506.2 1376.5,438.8 1377.5,506.5 1379.5,460.0 1380.5,483.2 1382.5,482.5 1384.5,506.5 1386.5,470.0 1388.5,506.5 1390.5,485.0 1392.5,506.2" fill="none" stroke="#00ffff" stroke-width="1" stroke-linejoin="miter" /><polyline points="1399.5,506.2 1400.5,441.2 1401.5,475.0 1403.5,498.2 1404.5,482.2 1406.5,506.5 1408.5,486.2 1409.5,506.5 1411.5,495.0 1412.5,506.2" fill="none" stroke="#00ffff" stroke-width="1" stroke-linejoin="miter" /><polyline points="1425.5,506.2 1426.5,442.5 1427.5,506.5 1428.5,443.5 1430.5,464.2 1432.5,463.1 1433.5,436.2 1435.5,506.5 1436.5,475.0 1438.5,506.5 1440.5,480.4 1441.5,471.2 1443.5,506.5 1445.5,473.5 1446.5,450.0 1448.5,506.5 1450.5,483.9 1451.5,488.8 1453.5,506.5 1454.5,477.1 1456.5,490.2 1458.5,451.2 1459.5,506.5 1461.5,463.3 1462.5,472.5 1464.5,457.5 1466.5,490.1 1468.5,453.2 1470.5,446.2 1471.5,506.2" fill="none" stroke="#00ffff" stroke-width="1" stroke-linejoin="miter" /><polyline points="1514.5,506.2 1515.5,435.0 1518.5,506.2 1520.5,506.2 1521.5,467.5 1522.5,506.2 1529.5,506.2 1530.5,468.8 1531.5,506.2" fill="none" stroke="#00ffff" stroke-width="1" stroke-linejoin="miter" /><polyline points="1566.5,506.2 1566.5,437.5 1568.5,506.2 1573.5,506.2 1574.5,500.0 1575.5,506.2 1582.5,506.2 1582.5,460.0 1584.5,456.2 1586.5,482.9 1588.5,474.7 1590.5,466.2 1590.5,506.2" fill="none" stroke="#00ffff" stroke-width="1" stroke-linejoin="miter" /><polyline points="1613.5,506.2 1614.5,460.0 1616.5,506.5 1618.5,431.2 1620.5,457.0 1622.5,433.8 1624.5,506.5 1626.5,461.2 1628.5,506.5 1630.5,506.2 1634.5,506.2 1635.5,473.8 1636.5,506.5 1638.5,475.0 1640.5,506.2 1644.5,506.2 1645.5,458.8 1646.5,506.5 1648.5,476.7 1650.5,452.5 1651.5,506.5 1652.5,492.5 1654.5,506.2 1662.5,506.2 1663.5,436.2 1665.5,506.5 1666.5,440.0 1668.5,506.5 1670.5,475.0 1672.5,506.5 1673.5,448.8 1675.5,506.5 1678.5,477.5 1679.5,495.6 1680.5,490.2 1682.5,481.2 1684.5,506.2 1688.5,506.2 1689.5,492.5 1691.5,506.5 1692.5,465.0 1695.5,506.2 1697.5,506.2 1698.5,485.0 1699.5,506.5 1701.5,506.2 1704.5,506.2 1705.5,465.0 1707.5,506.5 1709.5,487.5 1710.5,506.5 1712.5,484.7 1713.5,494.6 1715.5,478.8 1717.5,506.5 1718.5,482.8 1720.5,460.0 1722.5,506.5 1723.5,485.5 1725.5,485.0 1727.5,506.5 1728.5,472.2 1730.5,506.5 1732.5,453.8 1734.5,506.2" fill="none" stroke="#00ffff" stroke-width="1" stroke-linejoin="miter" /><polyline points="1822.5,506.2 1822.5,427.5 1825.5,506.2 1827.5,506.2 1828.5,460.0 1830.5,506.2" fill="none" stroke="#00ffff" stroke-width="1" stroke-linejoin="miter" /><polyline points="382.0,160.5 690.0,160.5 691.0,161.5 1196.0,161.5 1197.0,162.5 1567.0,162.5 1568.0,163.5 1907.0,163.5" fill="none" stroke="#ff0000" stroke-width="1" stroke-linejoin="miter" /><polyline points="382.0,177.5 1472.0,177.5 1473.0,178.5 1907.0,178.5" fill="none" stroke="#ffff00" stroke-width="1" stroke-linejoin="miter" /><polyline points="382.0,224.5 1795.0,224.5 1797.0,220.5 1907.0,220.5" fill="none" stroke="#008080" stroke-width="1" stroke-linejoin="miter" /><polyline points="382.0,226.5 417.0,226.5" fill="none" stroke="#900000" stroke-width="1" stroke-linejoin="miter" /><polyline points="1830.0,222.5 1900.0,222.5" fill="none" stroke="#900000" stroke-width="1" stroke-linejoin="miter" /><polyline points="382.0,134.5 413.0,134.5" fill="none" stroke="#00ff00" stroke-width="1" stroke-linejoin="miter" /><polyline points="415.5,134.0 415.5,167.0" fill="none" stroke="#00ff00" stroke-width="1" stroke-linejoin="miter" /><polyline points="415.0,134.5 686.0,134.5" fill="none" stroke="#00ff00" stroke-width="1" stroke-linejoin="miter" /><polyline points="382.0,141.5 686.0,141.5" fill="none" stroke="#00ffff" stroke-width="1" stroke-linejoin="miter" /><polyline points="686.0,140.0 687.2,136.3 688.4,133.5 689.6,133.8 690.8,136.8 692.0,140.0 694.0,142.8 696.0,144.3 698.0,143.8 700.0,142.6 702.0,140.0 703.6,138.1 705.2,136.8 706.8,136.8 708.4,138.4 710.0,140.0 711.2,136.4 712.4,133.5 713.6,133.0 714.8,135.3 716.0,140.0 718.4,137.4 720.8,134.3 723.2,134.9 725.6,136.6 728.0,140.0 730.0,139.2 732.0,138.7 734.0,138.7 736.0,139.2 738.0,140.0 739.6,140.7 741.2,141.3 742.8,141.5 744.4,140.7 746.0,140.0 746.8,140.4 747.6,140.9 748.4,141.0 749.2,140.0 750.0,140.0 752.0,137.7 754.0,137.3 756.0,137.3 758.0,137.6 760.0,140.0 760.8,139.4 761.6,139.0 762.4,139.0 763.2,139.3 764.0,140.0 765.0,141.2 766.0,142.8 767.0,142.6 768.0,141.5 769.0,140.0 770.0,141.0 771.0,141.7 772.0,141.9 773.0,141.3 774.0,140.0 775.2,139.2 776.4,138.4 777.6,138.3 778.8,139.0 780.0,140.0 782.4,138.5 784.8,137.6 787.2,138.0 789.6,138.5 792.0,140.0 793.0,141.3 794.0,142.4 795.0,142.6 796.0,141.5 797.0,140.0 798.2,138.3 799.4,138.0 800.6,137.8 801.8,138.7 803.0,140.0 803.8,138.4 804.6,137.2 805.4,137.6 806.2,138.4 807.0,140.0 808.6,145.9 810.2,149.2 811.8,149.0 813.4,146.8 815.0,140.0 817.0,138.3 819.0,137.9 821.0,137.9 823.0,138.5 825.0,140.0 825.8,140.3 826.6,141.6 827.4,141.7 828.2,140.7 829.0,140.0 830.0,138.6 831.0,137.9 832.0,137.6 833.0,138.4 834.0,140.0 834.8,138.6 835.6,137.8 836.4,138.3 837.2,138.8 838.0,140.0 839.6,137.9 841.2,137.2 842.8,136.9 844.4,138.0 846.0,140.0 847.6,138.8 849.2,138.0 850.8,138.2 852.4,138.6 854.0,140.0 854.8,141.5 855.6,142.7 856.4,143.3 857.2,141.6 858.0,140.0 860.4,140.4 862.8,140.0 865.2,140.0 867.6,140.4 870.0,140.0 871.2,139.7 872.4,139.6 873.6,139.4 874.8,139.7 876.0,140.0 876.8,142.3 877.6,143.7 878.4,143.1 879.2,142.7 880.0,140.0 881.4,138.7 882.8,138.6 884.2,138.6 885.6,138.7 887.0,140.0 888.0,141.3 889.0,141.4 890.0,141.5 891.0,141.3 892.0,140.0 894.4,138.4 896.8,138.1 899.2,138.1 901.6,138.5 904.0,140.0 905.2,143.8 906.4,145.8 907.6,145.0 908.8,143.5 910.0,140.0 911.4,135.4 912.8,132.6 914.2,132.4 915.6,135.7 917.0,140.0 918.2,136.1 919.4,133.9 920.6,134.1 921.8,136.6 923.0,140.0 924.2,141.7 925.4,143.5 926.6,143.0 927.8,141.8 929.0,140.0 930.2,138.9 931.4,137.5 932.6,138.3 933.8,139.2 935.0,140.0 936.2,142.9 937.4,144.0 938.6,144.8 939.8,142.9 941.0,140.0 941.8,141.8 942.6,142.4 943.4,142.2 944.2,141.8 945.0,140.0 947.0,140.5 949.0,141.1 951.0,140.8 953.0,140.6 955.0,140.0 956.4,138.9 957.8,138.2 959.2,137.2 960.6,138.8 962.0,140.0 963.0,139.4 964.0,138.6 965.0,138.8 966.0,139.4 967.0,140.0 968.0,139.7 969.0,139.5 970.0,139.5 971.0,139.7 972.0,140.0 972.8,141.5 973.6,142.5 974.4,142.8 975.2,141.5 976.0,140.0 978.4,141.3 980.8,142.1 983.2,141.9 985.6,141.0 988.0,140.0 990.4,140.3 992.8,140.5 995.2,140.5 997.6,140.3 1000.0,140.0 1001.0,141.6 1002.0,142.8 1003.0,142.4 1004.0,141.4 1005.0,140.0 1006.4,138.4 1007.8,137.5 1009.2,137.9 1010.6,138.7 1012.0,140.0 1012.4,138.8 1012.8,138.0 1013.2,137.8 1013.6,138.4 1014.0,140.0" fill="none" stroke="#00ffff" stroke-width="1" stroke-linejoin="miter" /><polyline points="686.0,140.0 687.2,144.1 688.4,146.7 689.6,146.7 690.8,144.1 692.0,140.0 694.0,138.9 696.0,137.6 698.0,137.6 700.0,138.9 702.0,140.0 703.6,142.1 705.2,143.4 706.8,143.4 708.4,142.1 710.0,140.0 711.2,144.7 712.4,147.6 713.6,147.6 714.8,144.7 716.0,140.0 718.4,145.7 720.8,148.6 723.2,148.6 725.6,145.7 728.0,140.0 730.0,141.1 732.0,141.7 734.0,141.7 736.0,141.1 738.0,140.0 739.6,137.2 741.2,136.1 742.8,136.1 744.4,137.2 746.0,140.0 746.8,137.6 747.6,136.7 748.4,136.7 749.2,137.6 750.0,140.0 752.0,140.4 754.0,141.3 756.0,141.3 758.0,140.4 760.0,140.0 760.8,140.7 761.6,141.1 762.4,141.1 763.2,140.7 764.0,140.0 765.0,138.2 766.0,137.1 767.0,137.1 768.0,138.2 769.0,140.0 770.0,138.6 771.0,137.7 772.0,137.7 773.0,138.6 774.0,140.0 775.2,141.1 776.4,141.7 777.6,141.7 778.8,141.1 780.0,140.0 782.4,141.8 784.8,142.9 787.2,142.9 789.6,141.8 792.0,140.0 793.0,138.2 794.0,137.1 795.0,137.1 796.0,138.2 797.0,140.0 798.2,141.8 799.4,142.9 800.6,142.9 801.8,141.8 803.0,140.0 803.8,141.8 804.6,142.9 805.4,142.9 806.2,141.8 807.0,140.0 808.6,135.1 810.2,131.5 811.8,131.5 813.4,135.1 815.0,140.0 817.0,141.8 819.0,142.9 821.0,142.9 823.0,141.8 825.0,140.0 825.8,137.2 826.6,136.1 827.4,136.1 828.2,137.2 829.0,140.0 830.0,141.8 831.0,142.9 832.0,142.9 833.0,141.8 834.0,140.0 834.8,141.4 835.6,142.3 836.4,142.3 837.2,141.4 838.0,140.0 839.6,140.4 841.2,141.3 842.8,141.3 844.4,140.4 846.0,140.0 847.6,141.4 849.2,142.3 850.8,142.3 852.4,141.4 854.0,140.0 854.8,137.9 855.6,136.6 856.4,136.6 857.2,137.9 858.0,140.0 860.4,141.7 862.8,142.1 865.2,142.1 867.6,141.7 870.0,140.0 871.2,140.4 872.4,140.6 873.6,140.6 874.8,140.4 876.0,140.0 876.8,139.2 877.6,138.1 878.4,138.1 879.2,139.2 880.0,140.0 881.4,139.4 882.8,139.6 884.2,139.6 885.6,139.4 887.0,140.0 888.0,140.6 889.0,140.4 890.0,140.4 891.0,140.6 892.0,140.0 894.4,139.7 896.8,140.1 899.2,140.1 901.6,139.7 904.0,140.0 905.2,135.9 906.4,133.3 907.6,133.3 908.8,135.9 910.0,140.0 911.4,143.1 912.8,145.7 914.2,145.7 915.6,143.1 917.0,140.0 918.2,144.1 919.4,146.7 920.6,146.7 921.8,144.1 923.0,140.0 924.2,137.6 925.4,136.2 926.6,136.2 927.8,137.6 929.0,140.0 930.2,143.4 931.4,144.8 932.6,144.8 933.8,143.4 935.0,140.0 936.2,138.6 937.4,137.2 938.6,137.2 939.8,138.6 941.0,140.0 941.8,139.9 942.6,139.3 943.4,139.3 944.2,139.9 945.0,140.0 947.0,139.3 949.0,138.9 951.0,138.9 953.0,139.3 955.0,140.0 956.4,143.4 957.8,144.8 959.2,144.8 960.6,143.4 962.0,140.0 963.0,142.8 964.0,143.9 965.0,143.9 966.0,142.8 967.0,140.0 968.0,140.4 969.0,140.6 970.0,140.6 971.0,140.4 972.0,140.0 972.8,137.9 973.6,136.6 974.4,136.6 975.2,137.9 976.0,140.0 978.4,138.6 980.8,137.7 983.2,137.7 985.6,138.6 988.0,140.0 990.4,139.6 992.8,139.4 995.2,139.4 997.6,139.6 1000.0,140.0 1001.0,138.2 1002.0,137.1 1003.0,137.1 1004.0,138.2 1005.0,140.0 1006.4,141.8 1007.8,142.9 1009.2,142.9 1010.6,141.8 1012.0,140.0 1012.4,141.8 1012.8,142.9 1013.2,142.9 1013.6,141.8 1014.0,140.0" fill="none" stroke="#00ff00" stroke-width="1" stroke-linejoin="miter" /><polyline points="1014.0,138.5 1259.0,138.5" fill="none" stroke="#00ffff" stroke-width="1" stroke-linejoin="miter" /><polyline points="1014.0,141.5 1259.0,141.5" fill="none" stroke="#00ff00" stroke-width="1" stroke-linejoin="miter" /><polyline points="1259.0,140.3 1261.0,140.8 1263.0,140.6 1265.0,140.5 1267.0,140.8 1269.0,140.3 1270.6,139.7 1272.2,139.6 1273.8,139.5 1275.4,139.7 1277.0,140.3 1278.4,139.4 1279.8,138.9 1281.2,139.3 1282.6,139.7 1284.0,140.3 1286.0,140.2 1288.0,139.1 1290.0,139.3 1292.0,139.9 1294.0,140.3 1296.0,140.2 1298.0,140.5 1300.0,140.3 1302.0,139.9 1304.0,140.3 1305.4,138.1 1306.8,137.5 1308.2,137.4 1309.6,138.1 1311.0,140.3 1313.4,142.1 1315.8,142.7 1318.2,142.3 1320.6,142.2 1323.0,140.3 1325.0,141.1 1327.0,140.9 1329.0,140.8 1331.0,141.0 1333.0,140.3 1334.0,139.4 1335.0,138.9 1336.0,138.6 1337.0,139.3 1338.0,140.3" fill="none" stroke="#00ffff" stroke-width="1" stroke-linejoin="miter" /><polyline points="1259.0,140.3 1261.0,141.9 1263.0,142.3 1265.0,142.3 1267.0,141.9 1269.0,140.3 1270.6,140.9 1272.2,141.3 1273.8,141.3 1275.4,140.9 1277.0,140.3 1278.4,141.2 1279.8,141.7 1281.2,141.7 1282.6,141.2 1284.0,140.3 1286.0,142.8 1288.0,143.7 1290.0,143.7 1292.0,142.8 1294.0,140.3 1296.0,138.4 1298.0,137.9 1300.0,137.9 1302.0,138.4 1304.0,140.3 1305.4,140.8 1306.8,141.7 1308.2,141.7 1309.6,140.8 1311.0,140.3 1313.4,140.4 1315.8,139.9 1318.2,139.9 1320.6,140.4 1323.0,140.3 1325.0,141.6 1327.0,141.8 1329.0,141.8 1331.0,141.6 1333.0,140.3 1334.0,141.5 1335.0,142.2 1336.0,142.2 1337.0,141.5 1338.0,140.3" fill="none" stroke="#00ff00" stroke-width="1" stroke-linejoin="miter" /><polyline points="1338.0,140.3 1360.0,140.3" fill="none" stroke="#00ffff" stroke-width="1" stroke-linejoin="miter" /><polyline points="1338.0,140.3 1360.0,140.3" fill="none" stroke="#00ff00" stroke-width="1" stroke-linejoin="miter" /><polyline points="1360.0,140.5 1361.2,138.0 1362.4,137.3 1363.6,137.2 1364.8,137.8 1366.0,140.5 1367.2,138.9 1368.4,138.5 1369.6,137.9 1370.8,139.0 1372.0,140.5 1374.4,139.0 1376.8,138.4 1379.2,138.7 1381.6,138.9 1384.0,140.5 1384.8,140.5 1385.6,139.8 1386.4,140.2 1387.2,140.6 1388.0,140.5" fill="none" stroke="#00ffff" stroke-width="1" stroke-linejoin="miter" /><polyline points="1360.0,140.5 1361.2,141.3 1362.4,142.4 1363.6,142.4 1364.8,141.3 1366.0,140.5 1367.2,142.3 1368.4,143.4 1369.6,143.4 1370.8,142.3 1372.0,140.5 1374.4,140.2 1376.8,140.6 1379.2,140.6 1381.6,140.2 1384.0,140.5 1384.8,142.6 1385.6,143.2 1386.4,143.2 1387.2,142.6 1388.0,140.5" fill="none" stroke="#00ff00" stroke-width="1" stroke-linejoin="miter" /><polyline points="1388.0,140.3 1405.0,140.3" fill="none" stroke="#00ffff" stroke-width="1" stroke-linejoin="miter" /><polyline points="1388.0,140.3 1405.0,140.3" fill="none" stroke="#00ff00" stroke-width="1" stroke-linejoin="miter" /><polyline points="1405.0,141.0 1406.2,138.4 1407.4,136.7 1408.6,136.6 1409.8,137.6 1411.0,141.0 1411.6,143.4 1412.2,145.7 1412.8,144.8 1413.4,142.6 1414.0,141.0" fill="none" stroke="#00ffff" stroke-width="1" stroke-linejoin="miter" /><polyline points="1405.0,141.0 1406.2,144.5 1407.4,146.7 1408.6,146.7 1409.8,144.5 1411.0,141.0 1411.6,136.5 1412.2,134.3 1412.8,134.3 1413.4,136.5 1414.0,141.0" fill="none" stroke="#00ff00" stroke-width="1" stroke-linejoin="miter" /><polyline points="1414.0,140.5 1424.0,140.5" fill="none" stroke="#00ffff" stroke-width="1" stroke-linejoin="miter" /><polyline points="1414.0,140.5 1424.0,140.5" fill="none" stroke="#00ff00" stroke-width="1" stroke-linejoin="miter" /><polyline points="1424.0,140.5 1425.0,141.1 1426.0,141.3 1427.0,141.4 1428.0,141.0 1429.0,140.5 1430.6,140.1 1432.2,140.6 1433.8,140.4 1435.4,140.1 1437.0,140.5 1439.4,141.2 1441.8,141.0 1444.2,141.0 1446.6,141.2 1449.0,140.5 1451.4,142.2 1453.8,143.2 1456.2,143.3 1458.6,142.3 1461.0,140.5 1462.2,142.0 1463.4,143.6 1464.6,143.8 1465.8,142.3 1467.0,140.5 1467.8,141.7 1468.6,142.7 1469.4,142.7 1470.2,141.8 1471.0,140.5" fill="none" stroke="#00ffff" stroke-width="1" stroke-linejoin="miter" /><polyline points="1424.0,140.5 1425.0,139.8 1426.0,139.4 1427.0,139.4 1428.0,139.8 1429.0,140.5 1430.6,138.8 1432.2,138.4 1433.8,138.4 1435.4,138.8 1437.0,140.5 1439.4,141.9 1441.8,142.1 1444.2,142.1 1446.6,141.9 1449.0,140.5 1451.4,138.4 1453.8,137.1 1456.2,137.1 1458.6,138.4 1461.0,140.5 1462.2,138.4 1463.4,137.1 1464.6,137.1 1465.8,138.4 1467.0,140.5 1467.8,139.1 1468.6,138.2 1469.4,138.2 1470.2,139.1 1471.0,140.5" fill="none" stroke="#00ff00" stroke-width="1" stroke-linejoin="miter" /><polyline points="1471.0,139.8 1515.0,139.8" fill="none" stroke="#00ffff" stroke-width="1" stroke-linejoin="miter" /><polyline points="1471.0,141.9 1515.0,141.9" fill="none" stroke="#00ff00" stroke-width="1" stroke-linejoin="miter" /><polyline points="1515.0,141.0 1516.4,141.5 1517.8,142.0 1519.2,142.0 1520.6,141.7 1522.0,141.0 1524.0,139.5 1526.0,139.0 1528.0,138.3 1530.0,139.6 1532.0,141.0 1532.8,139.4 1533.6,138.6 1534.4,138.6 1535.2,139.4 1536.0,141.0 1536.8,140.7 1537.6,140.6 1538.4,140.5 1539.2,140.8 1540.0,141.0 1541.2,140.7 1542.4,139.8 1543.6,140.1 1544.8,140.9 1546.0,141.0 1547.0,141.7 1548.0,141.6 1549.0,141.4 1550.0,141.7 1551.0,141.0 1551.8,141.0 1552.6,141.3 1553.4,141.2 1554.2,140.8 1555.0,141.0 1556.4,140.3 1557.8,139.7 1559.2,139.4 1560.6,140.2 1562.0,141.0 1563.4,140.5 1564.8,140.1 1566.2,139.9 1567.6,140.4 1569.0,141.0 1570.6,142.2 1572.2,143.2 1573.8,142.6 1575.4,142.2 1577.0,141.0 1578.4,141.3 1579.8,141.4 1581.2,141.4 1582.6,141.3 1584.0,141.0 1585.4,139.6 1586.8,138.8 1588.2,139.2 1589.6,139.9 1591.0,141.0 1592.6,139.1 1594.2,137.5 1595.8,137.4 1597.4,138.7 1599.0,141.0 1600.4,142.7 1601.8,143.8 1603.2,144.1 1604.6,143.3 1606.0,141.0 1607.6,141.9 1609.2,143.6 1610.8,143.6 1612.4,142.0 1614.0,141.0 1614.8,139.6 1615.6,138.2 1616.4,138.8 1617.2,139.6 1618.0,141.0 1619.4,140.7 1620.8,140.5 1622.2,140.6 1623.6,140.7 1625.0,141.0 1625.8,143.6 1626.6,144.5 1627.4,145.0 1628.2,143.7 1629.0,141.0 1630.2,143.6 1631.4,144.6 1632.6,144.8 1633.8,143.4 1635.0,141.0 1637.0,144.3 1639.0,145.2 1641.0,146.2 1643.0,144.0 1645.0,141.0 1647.4,138.7 1649.8,138.3 1652.2,138.1 1654.6,139.0 1657.0,141.0 1659.0,143.3 1661.0,144.8 1663.0,144.8 1665.0,143.7 1667.0,141.0 1667.8,141.6 1668.6,142.2 1669.4,142.1 1670.2,141.3 1671.0,141.0 1672.6,139.2 1674.2,138.2 1675.8,138.2 1677.4,139.6 1679.0,141.0 1679.8,140.6 1680.6,141.0 1681.4,141.0 1682.2,140.5 1683.0,141.0 1684.4,142.3 1685.8,142.8 1687.2,142.8 1688.6,142.1 1690.0,141.0 1691.2,139.5 1692.4,138.8 1693.6,138.8 1694.8,139.6 1696.0,141.0 1697.6,138.6 1699.2,136.3 1700.8,136.9 1702.4,138.7 1704.0,141.0 1706.4,140.7 1708.8,140.5 1711.2,140.5 1713.6,140.7 1716.0,141.0 1717.2,140.7 1718.4,140.6 1719.6,140.4 1720.8,140.7 1722.0,141.0 1722.8,140.9 1723.6,141.6 1724.4,141.5 1725.2,140.7 1726.0,141.0 1726.6,139.7 1727.2,138.7 1727.8,139.0 1728.4,139.2 1729.0,141.0" fill="none" stroke="#00ffff" stroke-width="1" stroke-linejoin="miter" /><polyline points="1515.0,141.0 1516.4,140.3 1517.8,139.9 1519.2,139.9 1520.6,140.3 1522.0,141.0 1524.0,142.8 1526.0,143.9 1528.0,143.9 1530.0,142.8 1532.0,141.0 1532.8,142.8 1533.6,143.9 1534.4,143.9 1535.2,142.8 1536.0,141.0 1536.8,141.4 1537.6,141.6 1538.4,141.6 1539.2,141.4 1540.0,141.0 1541.2,143.4 1542.4,144.3 1543.6,144.3 1544.8,143.4 1546.0,141.0 1547.0,142.4 1548.0,142.6 1549.0,142.6 1550.0,142.4 1551.0,141.0 1551.8,138.9 1552.6,138.3 1553.4,138.3 1554.2,138.9 1555.0,141.0 1556.4,142.1 1557.8,142.7 1559.2,142.7 1560.6,142.1 1562.0,141.0 1563.4,141.7 1564.8,142.1 1566.2,142.1 1567.6,141.7 1569.0,141.0 1570.6,139.6 1572.2,138.7 1573.8,138.7 1575.4,139.6 1577.0,141.0 1578.4,140.6 1579.8,140.4 1581.2,140.4 1582.6,140.6 1584.0,141.0 1585.4,142.4 1586.8,143.3 1588.2,143.3 1589.6,142.4 1591.0,141.0 1592.6,143.4 1594.2,144.8 1595.8,144.8 1597.4,143.4 1599.0,141.0 1600.4,138.6 1601.8,137.2 1603.2,137.2 1604.6,138.6 1606.0,141.0 1607.6,137.6 1609.2,136.2 1610.8,136.2 1612.4,137.6 1614.0,141.0 1614.8,142.8 1615.6,143.9 1616.4,143.9 1617.2,142.8 1618.0,141.0 1619.4,141.4 1620.8,141.6 1622.2,141.6 1623.6,141.4 1625.0,141.0 1625.8,139.9 1626.6,138.6 1627.4,138.6 1628.2,139.9 1629.0,141.0 1630.2,140.2 1631.4,139.1 1632.6,139.1 1633.8,140.2 1635.0,141.0 1637.0,137.5 1639.0,135.3 1641.0,135.3 1643.0,137.5 1645.0,141.0 1647.4,141.4 1649.8,142.3 1652.2,142.3 1654.6,141.4 1657.0,141.0 1659.0,138.1 1661.0,136.2 1663.0,136.2 1665.0,138.1 1667.0,141.0 1667.8,138.2 1668.6,137.1 1669.4,137.1 1670.2,138.2 1671.0,141.0 1672.6,142.8 1674.2,143.9 1675.8,143.9 1677.4,142.8 1679.0,141.0 1679.8,139.3 1680.6,138.9 1681.4,138.9 1682.2,139.3 1683.0,141.0 1684.4,139.6 1685.8,138.7 1687.2,138.7 1688.6,139.6 1690.0,141.0 1691.2,142.8 1692.4,143.9 1693.6,143.9 1694.8,142.8 1696.0,141.0 1697.6,143.9 1699.2,145.8 1700.8,145.8 1702.4,143.9 1704.0,141.0 1706.4,141.4 1708.8,141.6 1711.2,141.6 1713.6,141.4 1716.0,141.0 1717.2,141.4 1718.4,141.6 1719.6,141.6 1720.8,141.4 1722.0,141.0 1722.8,138.9 1723.6,138.3 1724.4,138.3 1725.2,138.9 1726.0,141.0 1726.6,142.8 1727.2,143.9 1727.8,143.9 1728.4,142.8 1729.0,141.0" fill="none" stroke="#00ff00" stroke-width="1" stroke-linejoin="miter" /><polyline points="1729.0,144.2 1907.0,144.2" fill="none" stroke="#00ffff" stroke-width="1" stroke-linejoin="miter" /><polyline points="1729.0,141.4 1907.0,141.4" fill="none" stroke="#00ff00" stroke-width="1" stroke-linejoin="miter" /><rect x="1794" y="141" width="3" height="51" fill="#00ff00"/><polyline points="382.5,251.5 383.5,252.5 413.5,252.5 429.5,253.5 448.5,253.5 449.5,257.5 450.5,259.5 453.5,258.5 478.5,257.5 492.5,256.5 499.5,252.5 536.5,252.5 555.5,254.5 576.5,255.5 577.5,257.5 597.5,257.5 646.5,258.5 647.5,259.5 672.5,260.5 680.5,264.5 683.5,264.5 701.5,264.5 708.5,261.5 722.5,260.5 726.5,259.5 727.5,257.5 754.5,257.5 755.5,256.5 778.5,256.5 779.5,254.5 796.5,254.5 798.5,253.5 823.5,253.5 825.5,252.5 858.5,252.5 860.5,250.5 865.5,250.5 866.5,252.5 886.5,252.5 888.5,254.5 904.5,254.5 904.5,254.5 930.5,254.5 932.5,253.5 941.5,253.5 942.5,252.5 950.5,252.5 951.5,250.5 956.5,250.5 958.5,252.5 988.5,252.5 989.5,253.5 1013.5,253.5 1014.5,254.5 1035.5,254.5 1037.5,253.5 1040.5,252.5 1062.5,252.5 1097.5,252.5 1102.5,254.5 1104.5,257.5 1119.5,257.5 1120.5,257.5 1140.5,257.5 1141.5,255.5 1170.5,255.5 1172.5,253.5 1204.5,253.5 1205.5,252.5 1219.5,252.5 1221.5,250.5 1228.5,248.5 1239.5,248.5 1241.5,249.5 1256.5,249.5 1259.5,251.5 1259.5,257.5 1270.5,257.5 1272.5,255.5 1278.5,254.5 1294.5,254.5 1296.5,252.5 1329.5,252.5 1330.5,250.5 1333.5,252.5 1349.5,252.5 1351.5,253.5 1361.5,254.5 1379.5,254.5 1384.5,253.5 1390.5,252.5 1391.5,251.5 1397.5,251.5 1398.5,252.5 1402.5,252.5 1423.5,252.5 1424.5,254.5 1429.5,254.5 1430.5,252.5 1473.5,252.5 1475.5,254.5 1487.5,254.5 1489.5,254.5 1515.5,254.5 1517.5,253.5 1530.5,253.5 1532.5,252.5 1566.5,252.5 1567.5,250.5 1571.5,250.5 1572.5,252.5 1592.5,252.5 1594.5,253.5 1605.5,253.5 1607.5,254.5 1623.5,254.5 1625.5,253.5 1636.5,253.5 1638.5,252.5 1673.5,252.5 1676.5,250.5 1685.5,250.5 1687.5,252.5 1711.5,252.5 1713.5,253.5 1728.5,253.5 1738.5,254.5 1742.5,252.5 1745.5,251.5 1753.5,249.5 1767.5,249.5 1768.5,250.5 1784.5,250.5 1785.5,252.5 1794.5,252.5 1795.5,262.5 1795.5,271.5 1800.5,271.5 1801.5,276.5 1806.5,276.5 1814.5,275.5 1827.5,273.5 1837.5,271.5 1846.5,271.5 1858.5,269.5 1858.5,268.5 1883.5,268.5 1884.5,267.5 1899.5,267.5 1900.5,266.5 1905.5,266.5" fill="none" stroke="#00ffff" stroke-width="1" stroke-linejoin="miter" /><polyline points="382.5,257.5 413.5,257.5 414.5,279.5 417.5,281.5 433.5,283.5 442.5,285.5 446.5,286.5 447.5,283.5 448.5,267.5 451.5,264.5 460.5,263.5 462.5,261.5 474.5,261.5 490.5,260.5 494.5,263.5 499.5,266.5 515.5,270.5 524.5,272.5 525.5,274.5 536.5,275.5 543.5,278.5 559.5,280.5 566.5,282.5 580.5,284.5 582.5,286.5 599.5,287.5 620.5,288.5 622.5,289.5 635.5,291.5 665.5,291.5 667.5,292.5 676.5,292.5 677.5,288.5 678.5,276.5 680.5,271.5 683.5,268.5 694.5,267.5 701.5,267.5 713.5,266.5 715.5,264.5 722.5,264.5 729.5,264.5 730.5,263.5 785.5,263.5 786.5,261.5 813.5,261.5 814.5,260.5 843.5,260.5 844.5,259.5 865.5,259.5 866.5,257.5 952.5,257.5 954.5,257.5 957.5,258.5 960.5,258.5 961.5,257.5 1034.5,257.5 1036.5,258.5 1039.5,262.5 1043.5,263.5 1049.5,263.5 1053.5,265.5 1058.5,267.5 1062.5,268.5 1069.5,271.5 1078.5,273.5 1087.5,275.5 1096.5,277.5 1097.5,278.5 1101.5,279.5 1104.5,262.5 1111.5,261.5 1126.5,260.5 1128.5,259.5 1202.5,259.5 1204.5,257.5 1210.5,257.5 1214.5,261.5 1217.5,263.5 1224.5,264.5 1228.5,267.5 1237.5,269.5 1246.5,272.5 1250.5,274.5 1257.5,275.5 1258.5,272.5 1259.5,264.5 1265.5,263.5 1267.5,262.5 1275.5,261.5 1290.5,260.5 1292.5,260.5 1317.5,259.5 1319.5,258.5 1390.5,258.5 1391.5,257.5 1402.5,257.5 1435.5,257.5 1437.5,255.5 1468.5,255.5 1469.5,254.5 1496.5,254.5 1498.5,257.5 1499.5,255.5 1503.5,257.5 1565.5,257.5 1566.5,254.5 1605.5,254.5 1607.5,257.5 1630.5,257.5 1631.5,254.5 1636.5,254.5 1638.5,257.5 1671.5,257.5 1673.5,254.5 1735.5,254.5 1738.5,257.5 1742.5,260.5 1750.5,262.5 1757.5,266.5 1767.5,268.5 1774.5,274.5 1785.5,278.5 1786.5,279.5 1794.5,279.5 1795.5,291.5 1795.5,305.5 1801.5,305.5 1801.5,288.5 1802.5,283.5 1804.5,280.5 1809.5,277.5 1814.5,275.5 1838.5,274.5 1839.5,272.5 1862.5,272.5 1882.5,271.5 1883.5,271.5 1905.5,271.5" fill="none" stroke="#ffff00" stroke-width="1" stroke-linejoin="miter" /><polyline points="382.0,326.5 1643.5,326.5" fill="none" stroke="#d0006a" stroke-width="1" stroke-linejoin="miter" /><polyline points="1643.5,327.5 1710.5,327.5 1710.5,329.5 1643.5,329.5 1643.5,327.5" fill="none" stroke="#ff00ff" stroke-width="1" stroke-linejoin="miter" /><polyline points="1710.5,329.5 1795.0,329.5" fill="none" stroke="#d0006a" stroke-width="1" stroke-linejoin="miter" /><polyline points="404.0,326.0 413.0,326.0" fill="none" stroke="#ff00ff" stroke-width="2" stroke-linejoin="miter" /><polyline points="724.0,326.5 740.0,326.5" fill="none" stroke="#ff00ff" stroke-width="1" stroke-linejoin="miter" /><polyline points="1796.5,345.0 1796.5,330.5 1850.0,330.5 1855.0,332.5 1907.0,332.5" fill="none" stroke="#d0006a" stroke-width="1" stroke-linejoin="miter" /><polyline points="1826.0,330.5 1856.0,330.5" fill="none" stroke="#ff00ff" stroke-width="1" stroke-linejoin="miter" /><rect x="1795" y="329" width="1" height="16" fill="#d0006a"/><polyline points="382.0,330.5 460.0,330.5 461.0,332.5 677.0,332.5 678.0,333.5 818.0,333.5 820.0,335.5 825.0,335.5 826.0,334.5 1277.0,334.5 1279.0,336.5 1438.0,336.5 1440.0,337.5 1454.0,337.5 1455.0,336.5 1462.0,336.5 1464.0,337.5 1478.0,337.5 1480.0,336.5 1773.0,336.5 1774.0,334.5 1795.0,334.5 1796.0,338.5 1837.0,338.5 1838.0,340.5 1882.0,340.5 1883.0,338.5 1907.0,338.5" fill="none" stroke="#00ff00" stroke-width="1" stroke-linejoin="miter" /><rect x="382" y="711" width="1525" height="1" fill="#ffffff"/><rect x="382" y="713" width="1525" height="1" fill="#ffff00"/><polyline points="382.0,616.5 396.0,616.5 398.0,619.5 400.0,614.5 402.0,616.5 405.0,616.5 406.0,619.0 407.0,712.0 408.0,712.5" fill="none" stroke="#ff00ff" stroke-width="1" stroke-linejoin="miter" /><polyline points="445.0,712.5 446.0,650.0 446.5,584.5 448.5,616.0 450.0,616.5 452.0,607.6 454.0,619.8 455.0,615.5 462.0,615.5 463.0,607.4 464.0,616.3 465.0,618.5 470.0,618.5 473.0,614.4 476.0,621.2 477.0,618.5 479.0,611.1 481.0,620.1 482.0,618.5 484.0,607.6 486.0,620.2 488.0,620.0 489.0,684.0 490.0,712.5" fill="none" stroke="#ff00ff" stroke-width="1" stroke-linejoin="miter" /><polyline points="676.0,712.5 677.0,650.0 677.5,599.0 679.5,616.0 681.0,616.5 683.0,607.5 685.0,618.2 686.0,616.5 688.0,607.3 690.0,619.1 691.0,616.5 692.0,610.1 693.0,618.2 694.0,616.5 695.0,612.3 696.0,618.1 697.0,615.5 700.0,615.5 702.0,611.8 704.0,618.1 705.0,616.5 711.0,617.5 718.0,617.5 719.0,619.8 720.0,617.5 721.0,617.5 722.0,610.2 723.0,617.9 724.0,617.5 725.0,621.1 726.0,617.5 727.0,616.5 731.0,616.5 734.0,605.9 737.0,617.8 738.0,615.5 740.0,618.5 747.0,616.5 754.0,616.5 760.0,616.5 763.0,606.7 766.0,617.2 767.0,616.5 771.0,610.1 775.0,617.1 776.0,616.5 778.0,612.0 780.0,616.7 781.0,616.5 782.0,620.0 783.0,616.5 784.0,616.5 785.0,606.7 786.0,618.1 787.0,616.5 788.0,620.2 789.0,616.5 790.0,615.5 794.0,615.5 795.0,618.4 796.0,615.5 797.0,615.5 803.0,615.5 807.0,612.0 811.0,619.4 812.0,615.5 813.0,618.4 814.0,615.5 815.0,615.5 818.0,615.5 820.0,615.5 822.0,609.4 824.0,615.9 825.0,615.5 826.0,608.3 827.0,615.7 828.0,615.5 830.0,605.1 832.0,618.6 833.0,615.5 834.0,617.6 835.0,615.5 836.0,615.5 837.0,618.3 838.0,615.5 839.0,616.5 841.0,618.5 848.0,616.5 851.0,616.5 853.0,606.4 855.0,620.3 856.0,616.5 863.0,616.5 865.0,618.5 869.0,618.5 871.0,608.3 873.0,622.1 874.0,618.5 875.0,621.0 876.0,618.5 877.0,615.5 880.0,615.5 881.0,618.7 882.0,615.5 883.0,615.5 885.0,609.3 887.0,616.2 888.0,615.5 890.0,605.0 892.0,619.1 893.0,615.5 894.0,606.2 895.0,618.6 896.0,615.5 899.0,605.6 902.0,617.7 903.0,615.5 904.0,619.3 905.0,615.5 906.0,615.5 909.0,604.6 912.0,618.5 913.0,615.5 915.0,609.3 917.0,617.8 918.0,615.5 921.0,606.3 924.0,616.4 925.0,616.5 933.0,618.5 940.0,616.5 947.0,616.5 951.0,612.0 955.0,619.0 956.0,616.5 957.0,610.4 958.0,617.0 959.0,616.5 960.0,608.2 961.0,616.7 962.0,616.5 963.0,619.1 964.0,616.5 965.0,616.5 966.0,619.6 967.0,616.5 968.0,616.5 970.0,610.9 972.0,617.3 973.0,615.5 976.0,615.5 978.0,605.0 980.0,618.3 981.0,615.5 982.0,617.6 983.0,615.5 984.0,615.5 986.0,607.1 988.0,617.1 989.0,615.5 993.0,612.1 997.0,619.1 998.0,615.5 999.0,618.7 1000.0,615.5 1001.0,618.5 1008.0,618.5 1009.0,620.8 1010.0,618.5 1011.0,618.5 1012.0,614.7 1013.0,620.1 1014.0,618.5 1015.0,614.8 1016.0,618.5 1017.0,618.5 1018.0,622.4 1019.0,618.5 1020.0,618.5 1024.0,613.7 1028.0,621.1 1029.0,615.5 1031.0,620.0 1032.0,684.0 1033.0,712.5" fill="none" stroke="#ff00ff" stroke-width="1" stroke-linejoin="miter" /><polyline points="929.5,616.0 929.5,584.5 931.5,608.0 933.0,607.0" fill="none" stroke="#ff00ff" stroke-width="1" stroke-linejoin="miter" /><polyline points="1100.0,712.5 1101.0,650.0 1101.5,583.0 1103.0,613.0 1105.0,616.5 1107.5,616.5 1109.5,613.9 1111.5,618.4 1112.5,615.5 1126.5,615.5 1129.5,611.0 1132.5,615.7 1133.5,616.5 1142.5,617.5 1151.5,616.5 1162.5,617.5 1168.5,617.5 1171.5,614.1 1174.5,619.6 1175.5,617.5 1185.5,616.5 1192.5,616.5 1200.5,616.5 1202.5,614.2 1204.5,619.3 1205.5,617.5 1209.5,618.0 1210.5,712.5" fill="none" stroke="#ff00ff" stroke-width="1" stroke-linejoin="miter" /><polyline points="1257.0,712.5 1258.0,650.0 1258.5,586.0 1260.5,616.0 1262.0,617.5 1268.0,617.5 1272.0,607.2 1276.0,619.4 1277.0,616.5 1279.0,616.5 1283.0,607.6 1287.0,620.0 1288.0,615.5 1294.0,615.5 1295.0,618.6 1296.0,615.5 1297.0,615.5 1298.0,611.9 1299.0,615.9 1300.0,617.5 1303.0,616.5 1305.0,616.5 1306.0,608.2 1307.0,619.3 1308.0,616.5 1314.0,616.5 1320.0,616.5 1327.0,616.5 1330.0,616.5 1331.0,612.3 1332.0,620.3 1333.0,616.5 1340.0,615.5 1342.0,615.5 1344.0,606.1 1346.0,616.7 1347.0,615.5 1349.0,610.2 1351.0,616.5 1352.0,615.5 1354.0,606.7 1356.0,619.1 1357.0,618.5 1363.0,618.5 1364.0,621.1 1365.0,618.5 1366.0,615.5 1368.0,615.5 1370.0,606.2 1372.0,617.4 1373.0,615.5 1374.0,607.8 1375.0,617.8 1376.0,615.5 1380.0,608.8 1384.0,616.3 1385.0,616.5 1387.0,616.5 1389.0,612.5 1391.0,620.4 1392.0,616.5 1393.0,620.4 1394.0,616.5 1395.0,616.5 1396.0,619.7 1397.0,616.5 1398.0,616.5 1400.0,606.9 1402.0,618.5 1403.0,616.5 1404.0,608.3 1405.0,618.5 1406.0,618.5 1408.0,617.5 1410.0,617.5 1411.0,611.2 1412.0,619.2 1413.0,617.5 1416.0,617.5 1420.0,610.9 1424.0,619.5 1425.0,617.5 1427.0,607.4 1429.0,621.3 1430.0,617.5 1434.0,609.6 1438.0,620.1 1439.0,617.5 1441.0,611.7 1443.0,621.0 1444.0,617.5 1445.0,620.6 1446.0,617.5 1447.0,617.5 1449.0,610.6 1451.0,619.8 1452.0,617.5 1454.0,610.6 1456.0,619.5 1457.0,617.5 1461.0,608.4 1465.0,618.1 1466.0,617.5 1468.0,612.3 1470.0,619.9 1471.0,617.5 1473.0,612.4 1475.0,618.5 1476.0,616.5 1479.0,616.5 1482.0,616.5 1484.0,605.6 1486.0,619.4 1487.0,616.5 1488.0,611.7 1489.0,617.6 1490.0,615.5 1492.0,615.5 1495.0,605.6 1498.0,618.3 1499.0,615.5 1500.0,618.8 1501.0,615.5 1502.0,615.5 1503.0,617.8 1504.0,615.5 1505.0,615.5 1507.0,615.5 1514.0,615.5 1515.0,619.0 1516.0,615.5 1517.0,615.5 1521.0,610.4 1525.0,618.9 1526.0,616.5 1531.0,616.5 1532.0,611.2 1533.0,620.1 1534.0,616.5 1536.0,610.1 1538.0,617.5 1539.0,616.5 1543.0,609.7 1547.0,619.9 1548.0,616.5 1549.0,619.8 1550.0,616.5 1551.0,617.5 1553.0,617.5 1554.0,610.4 1555.0,617.7 1556.0,617.5 1557.0,619.8 1558.0,617.5 1559.0,616.5 1565.0,616.5 1568.0,606.7 1571.0,618.7 1572.0,618.5 1574.0,617.5 1580.0,617.5 1583.0,608.5 1586.0,618.3 1587.0,615.5 1593.0,616.5 1600.0,617.5 1607.0,617.5 1610.0,612.1 1613.0,617.7 1614.0,617.5 1616.0,607.2 1618.0,619.8 1619.0,617.5 1622.0,611.9 1625.0,621.3 1626.0,617.5 1627.0,619.9 1628.0,617.5 1629.0,615.5 1634.0,615.5 1635.0,611.2 1636.0,618.7 1637.0,615.5 1644.0,615.5 1645.0,618.0 1646.0,615.5 1647.0,617.5 1654.0,615.5 1659.0,618.5 1666.0,618.5 1668.0,608.8 1670.0,621.6 1671.0,618.5 1673.0,609.8 1675.0,622.4 1676.0,615.5 1678.0,617.5 1682.0,617.5 1685.0,611.9 1688.0,619.4 1689.0,616.5 1696.0,616.5 1700.0,616.5 1702.0,617.5 1705.0,617.5 1706.0,620.2 1707.0,617.5 1708.0,617.5 1709.0,620.8 1710.0,617.5 1711.0,617.5 1713.0,613.6 1715.0,618.5 1716.0,617.5 1718.0,613.1 1720.0,618.2 1721.0,617.5 1722.0,621.1 1723.0,617.5 1724.0,617.5 1728.0,611.1 1732.0,618.2 1733.0,618.5 1735.0,620.0 1736.0,684.0 1737.0,712.5" fill="none" stroke="#ff00ff" stroke-width="1" stroke-linejoin="miter" /><polyline points="1799.0,712.5 1800.0,650.0 1800.5,585.0 1802.0,612.0 1805.0,616.5 1807.5,618.5 1816.5,618.5 1820.5,613.8 1824.5,618.8 1825.5,616.5 1838.5,616.5 1840.5,612.9 1842.5,618.4 1843.5,616.5 1844.5,619.5 1845.5,616.5 1846.5,615.5 1854.5,615.5 1855.5,618.6 1856.5,615.5 1857.5,616.5 1864.5,615.5 1878.5,615.5 1879.5,618.1 1880.5,615.5 1881.5,615.5 1882.5,618.4 1883.5,615.5 1884.5,616.5 1891.5,616.5 1896.5,617.5 1902.5,617.5 1903.5,620.5 1904.5,617.5 1905.5,616.5" fill="none" stroke="#ff00ff" stroke-width="1" stroke-linejoin="miter" /><polyline points="445.5,711.5 446.5,676.0 448.5,676.0 449.5,711.5" fill="none" stroke="#ffffff" stroke-width="1" stroke-linejoin="miter" /><polyline points="445.5,711.5 446.5,681.0 447.5,690.0 447.5,711.0" fill="none" stroke="#ffffff" stroke-width="2" stroke-linejoin="miter" /><polyline points="677.5,711.5 678.5,693.8 680.5,711.5 689.5,711.5 690.5,655.0 692.5,711.5 702.5,711.5 705.5,640.0 708.5,640.0 710.5,711.5 714.5,711.5 715.5,691.2 716.5,711.5 721.5,711.5 722.5,641.2 725.5,645.0 728.5,711.5 739.5,711.5 740.5,670.0 742.5,658.8 745.5,662.5 748.5,711.5 790.5,711.5 792.5,647.5 795.5,645.0 797.5,698.6 799.5,711.5 816.5,711.5 818.5,672.5 820.5,711.5 840.5,711.5 841.5,637.5 843.5,711.5 845.5,652.5 848.5,711.5 856.5,711.5 858.5,645.0 860.5,711.5" fill="none" stroke="#ffffff" stroke-width="1" stroke-linejoin="miter" /><polyline points="860.5,667.5 862.5,690.0 865.5,711.5 869.5,711.5 870.5,695.0 871.5,711.5 881.5,711.5 882.5,693.8 885.5,711.5 890.5,711.5 890.5,657.5 892.5,670.0 894.5,693.9 896.5,691.3 898.5,692.5 900.5,711.5 905.5,711.5 906.5,693.8 908.5,711.5 920.5,711.5 921.5,695.0 922.5,711.5 929.5,711.5 930.5,650.0 932.5,711.5 933.5,693.1 935.5,711.5 939.5,711.5 940.5,645.0 942.5,711.5 944.5,640.0 946.5,642.5 948.5,660.0 949.5,711.5 951.5,711.5 961.5,711.5 962.5,667.5 965.5,670.0 967.5,711.5 968.5,700.4 970.5,711.5 981.5,711.5 982.5,695.0 985.5,711.5 990.5,711.5 991.5,653.8 993.5,683.5 995.5,671.3 996.5,675.0 998.5,711.5 1000.5,677.5 1002.5,711.5 1004.5,711.5 1009.5,711.5 1010.5,695.0 1012.5,711.5 1019.5,711.5 1020.5,695.0 1022.5,711.5" fill="none" stroke="#ffffff" stroke-width="1" stroke-linejoin="miter" /><polyline points="1100.5,711.5 1101.5,676.2 1104.5,711.5 1105.5,711.5 1106.5,696.2 1108.5,711.5 1110.5,711.5 1111.5,711.5 1112.5,696.2 1115.5,711.5" fill="none" stroke="#ffffff" stroke-width="1" stroke-linejoin="miter" /><polyline points="1256.5,711.5 1258.5,676.2 1260.5,695.0 1262.5,711.5 1271.5,711.5 1272.5,638.8 1275.5,665.0 1278.5,692.5 1280.5,711.5 1294.5,711.5 1295.5,637.5 1298.5,665.0 1300.5,690.0 1302.5,711.5 1319.5,711.5 1320.5,695.0 1322.5,711.5 1325.5,711.5 1326.5,647.5 1329.5,652.5 1331.5,711.5 1332.5,711.5 1334.5,711.5 1335.5,692.5 1337.5,706.8 1338.5,705.8 1340.5,711.5" fill="none" stroke="#ffffff" stroke-width="1" stroke-linejoin="miter" /><polyline points="1358.5,711.5 1359.5,697.5 1360.5,711.5 1374.5,711.5 1375.5,660.0 1378.5,636.2 1380.5,633.8 1381.5,656.2 1383.5,711.5 1385.5,659.4 1386.5,626.2 1389.5,623.8 1391.5,711.5 1399.5,711.5 1400.5,650.0 1402.5,626.2 1404.5,711.5 1406.5,632.5 1409.5,626.2 1411.5,677.5 1414.5,711.5 1425.5,711.5 1426.5,635.0 1429.5,618.8 1431.5,711.5 1432.5,585.0 1435.5,632.5 1437.5,687.8 1438.5,668.8 1440.5,692.6 1441.5,640.0 1444.5,672.5 1446.5,711.5 1448.5,643.8 1449.5,711.5 1451.5,711.5 1456.5,711.5 1458.5,662.5 1459.5,711.5 1461.5,672.4 1462.5,630.0 1464.5,711.5 1466.5,633.7 1468.5,631.2 1469.5,696.6 1471.5,711.5" fill="none" stroke="#ffffff" stroke-width="1" stroke-linejoin="miter" /><polyline points="1514.5,711.5 1515.5,662.5 1518.5,711.5 1520.5,711.5 1521.5,695.0 1524.5,711.5 1529.5,711.5 1530.5,691.2 1532.5,711.5" fill="none" stroke="#ffffff" stroke-width="1" stroke-linejoin="miter" /><polyline points="1565.5,711.5 1566.5,652.5 1568.5,711.5 1572.5,711.5 1574.5,697.5 1575.5,711.5 1582.5,711.5 1584.5,697.5 1586.5,711.5 1588.5,711.5 1589.5,696.2 1590.5,711.5" fill="none" stroke="#ffffff" stroke-width="1" stroke-linejoin="miter" /><polyline points="1618.5,711.5 1619.5,648.8 1621.5,696.3 1622.5,650.0 1625.5,711.5 1626.5,711.5 1628.5,692.5 1630.5,711.5 1634.5,711.5 1635.5,697.5 1637.5,706.0 1639.5,697.5 1641.5,711.5 1645.5,711.5 1646.5,647.5 1648.5,700.2 1650.5,711.5 1651.5,697.5 1654.5,711.5 1665.5,711.5 1666.5,645.0 1668.5,711.5 1669.5,651.1 1671.5,711.5 1672.5,648.2 1674.5,635.0 1676.5,711.5 1678.5,621.2 1679.5,659.7 1681.5,667.7 1682.5,652.5 1684.5,711.5 1686.5,685.0 1688.5,705.4 1690.5,687.5 1692.5,699.6 1693.5,690.9 1695.5,690.0 1697.5,702.5 1699.5,690.0 1701.5,711.5 1706.5,711.5 1708.5,672.5 1709.5,711.5 1711.5,681.9 1712.5,666.2 1714.5,711.5 1716.5,711.5 1719.5,711.5 1720.5,650.0 1722.5,711.5 1726.5,711.5 1728.5,671.2 1729.5,711.5 1731.5,697.5 1734.5,711.5" fill="none" stroke="#ffffff" stroke-width="1" stroke-linejoin="miter" /><polyline points="1798.5,711.5 1799.5,679.0 1801.0,695.0 1803.0,711.5" fill="none" stroke="#ffffff" stroke-width="1" stroke-linejoin="miter" /><polyline points="686.5,713.5 686.5,698.4 690.5,698.4 690.5,698.4 692.5,698.4 692.5,680.0 695.5,680.0 695.5,698.4 695.5,698.4 695.5,713.5" fill="none" stroke="#ffff00" stroke-width="1" stroke-linejoin="miter" /><polyline points="697.5,713.5 697.5,697.5 698.5,697.5 698.5,713.5 699.2,713.5 699.5,713.5" fill="none" stroke="#ffff00" stroke-width="1" stroke-linejoin="miter" /><polyline points="704.5,713.5 704.5,698.4 707.5,698.4 707.5,713.5 708.0,713.5 708.5,713.5" fill="none" stroke="#ffff00" stroke-width="1" stroke-linejoin="miter" /><polyline points="719.5,713.5 719.5,698.4 723.5,698.4 723.5,698.4 725.5,698.4 725.5,680.0 725.5,680.0 725.5,713.5" fill="none" stroke="#ffff00" stroke-width="1" stroke-linejoin="miter" /><polyline points="739.5,713.5 739.5,698.4 743.5,698.4 743.5,713.5 744.5,713.5 744.5,698.4 746.5,698.4 746.5,713.5 746.8,713.5 746.5,713.5" fill="none" stroke="#ffff00" stroke-width="1" stroke-linejoin="miter" /><polyline points="750.5,713.5 750.5,697.5 753.5,697.5 753.5,713.5 754.5,713.5 754.5,697.5 755.5,697.5 755.5,713.5 756.5,713.5 756.5,697.5 759.5,697.5 759.5,713.5 760.5,713.5 760.5,706.3 762.5,706.3 762.5,713.5 763.0,713.5 762.5,713.5" fill="none" stroke="#ffff00" stroke-width="1" stroke-linejoin="miter" /><polyline points="782.5,713.5 782.5,697.5 783.5,697.5 783.5,713.5 785.5,713.5 785.5,697.5 786.5,697.5 786.5,713.5 788.0,713.5 788.5,713.5" fill="none" stroke="#ffff00" stroke-width="1" stroke-linejoin="miter" /><polyline points="790.5,713.5 790.5,698.4 793.5,698.4 793.5,713.5 795.5,713.5 795.5,680.0 796.5,680.0 796.5,698.4 797.5,698.4 797.5,680.0 798.0,680.0 798.5,713.5" fill="none" stroke="#ffff00" stroke-width="1" stroke-linejoin="miter" /><polyline points="810.5,713.5 810.5,672.5 814.5,672.5 814.5,713.5 815.5,713.5 815.5,672.5 817.5,672.5 817.5,695.0 819.5,695.0 819.5,672.5 820.5,672.5 820.5,713.5" fill="none" stroke="#ffff00" stroke-width="1" stroke-linejoin="miter" /><polyline points="838.5,713.5 838.5,698.4 839.5,698.4 839.5,713.5 840.5,713.5 840.5,698.4 843.5,698.4 843.5,713.5 845.5,713.5 845.5,680.0 847.5,680.0 847.5,713.5 848.0,713.5 848.5,713.5" fill="none" stroke="#ffff00" stroke-width="1" stroke-linejoin="miter" /><polyline points="860.5,713.5 860.5,697.5 863.5,697.5 863.5,713.5 864.5,713.5 864.5,706.3 866.5,706.3 866.5,706.3 867.5,706.3 867.5,697.5 869.5,697.5 869.5,713.5 870.5,713.5 870.5,713.5" fill="none" stroke="#ffff00" stroke-width="1" stroke-linejoin="miter" /><polyline points="876.5,713.5 876.5,706.3 878.5,706.3 878.5,706.3 880.5,706.3 880.5,697.5 882.5,697.5 882.5,706.3 883.5,706.3 883.5,706.3 886.5,706.3 886.5,713.5 887.5,713.5 887.5,706.3 888.0,706.3 888.5,713.5" fill="none" stroke="#ffff00" stroke-width="1" stroke-linejoin="miter" /><polyline points="890.5,713.5 890.5,698.4 892.5,698.4 892.5,713.5 893.5,713.5 893.5,680.0 895.5,680.0 895.5,713.5 896.5,713.5 896.5,698.4 898.0,698.4 898.5,713.5" fill="none" stroke="#ffff00" stroke-width="1" stroke-linejoin="miter" /><polyline points="906.5,713.5 906.5,706.3 907.5,706.3 907.5,713.5 908.5,713.5 908.5,706.3 910.5,706.3 910.5,713.5 910.5,713.5 910.5,713.5" fill="none" stroke="#ffff00" stroke-width="1" stroke-linejoin="miter" /><polyline points="914.5,713.5 914.5,706.3 916.5,706.3 916.5,706.3 916.8,706.3 916.5,713.5" fill="none" stroke="#ffff00" stroke-width="1" stroke-linejoin="miter" /><polyline points="920.5,713.5 920.5,706.3 924.5,706.3 924.5,713.5 925.5,713.5 925.5,697.5 926.8,697.5 926.5,713.5" fill="none" stroke="#ffff00" stroke-width="1" stroke-linejoin="miter" /><polyline points="936.5,713.5 936.5,680.0 940.5,680.0 940.5,713.5 942.5,713.5 942.5,698.4 945.5,698.4 945.5,698.4 946.5,698.4 946.5,680.0 948.0,680.0 948.5,713.5" fill="none" stroke="#ffff00" stroke-width="1" stroke-linejoin="miter" /><polyline points="960.5,713.5 960.5,680.0 963.5,680.0 963.5,713.5 965.5,713.5 965.5,680.0 969.2,680.0 969.5,713.5" fill="none" stroke="#ffff00" stroke-width="1" stroke-linejoin="miter" /><polyline points="982.5,713.5 982.5,680.0 983.5,680.0 983.5,713.5 984.5,713.5 984.5,698.4 985.5,698.4 985.5,713.5" fill="none" stroke="#ffff00" stroke-width="1" stroke-linejoin="miter" /><polyline points="990.5,713.5 990.5,680.0 994.5,680.0 994.5,713.5 995.5,713.5 995.5,698.4 999.5,698.4 999.5,713.5 1000.5,713.5 1000.5,680.0 1000.5,680.0 1000.5,713.5" fill="none" stroke="#ffff00" stroke-width="1" stroke-linejoin="miter" /><polyline points="1002.5,713.5 1002.5,697.5 1004.5,697.5 1004.5,706.3 1005.5,706.3 1005.5,697.5 1009.5,697.5 1009.5,706.3 1010.5,706.3 1010.5,706.3 1014.5,706.3 1014.5,713.5 1015.5,713.5 1015.5,697.5 1018.5,697.5 1018.5,713.5 1019.5,713.5 1019.5,697.5 1022.5,697.5 1022.5,713.5 1023.0,713.5 1022.5,713.5" fill="none" stroke="#ffff00" stroke-width="1" stroke-linejoin="miter" /><polyline points="1105.5,713.5 1105.5,697.5 1109.5,697.5 1109.5,713.5 1110.5,713.5 1110.5,697.5 1114.2,697.5 1114.5,713.5" fill="none" stroke="#ffff00" stroke-width="1" stroke-linejoin="miter" /><polyline points="1259.5,713.5 1259.5,706.3 1260.5,706.3 1260.5,713.5 1261.5,713.5 1261.5,697.5 1265.5,697.5 1265.5,713.5 1266.8,713.5 1266.5,713.5" fill="none" stroke="#ffff00" stroke-width="1" stroke-linejoin="miter" /><polyline points="1268.5,713.5 1268.5,698.4 1270.5,698.4 1270.5,713.5 1271.5,713.5 1271.5,698.4 1272.5,698.4 1272.5,713.5 1274.5,713.5 1274.5,698.4 1276.5,698.4 1276.5,713.5 1277.5,713.5 1277.5,680.0 1279.5,680.0 1279.5,713.5 1280.5,713.5 1280.5,680.0 1281.5,680.0 1281.5,713.5 1282.5,713.5 1282.5,698.4 1284.5,698.4 1284.5,698.4 1285.5,698.4 1285.5,698.4 1285.5,698.4 1285.5,713.5" fill="none" stroke="#ffff00" stroke-width="1" stroke-linejoin="miter" /><polyline points="1291.5,713.5 1291.5,698.4 1294.5,698.4 1294.5,713.5 1296.5,713.5 1296.5,680.0 1298.5,680.0 1298.5,713.5 1300.5,713.5 1300.5,680.0 1301.5,680.0 1301.5,698.4 1303.5,698.4 1303.5,698.4 1304.2,698.4 1304.5,713.5" fill="none" stroke="#ffff00" stroke-width="1" stroke-linejoin="miter" /><polyline points="1314.5,713.5 1314.5,706.3 1316.5,706.3 1316.5,713.5 1317.5,713.5 1317.5,697.5 1319.5,697.5 1319.5,713.5 1320.5,713.5 1320.5,697.5 1321.5,697.5 1321.5,706.3 1321.8,706.3 1321.5,713.5" fill="none" stroke="#ffff00" stroke-width="1" stroke-linejoin="miter" /><polyline points="1322.5,713.5 1322.5,680.0 1324.5,680.0 1324.5,698.4 1326.5,698.4 1326.5,698.4 1327.5,698.4 1327.5,713.5 1328.5,713.5 1328.5,680.0 1329.5,680.0 1329.5,713.5 1330.5,713.5 1330.5,713.5" fill="none" stroke="#ffff00" stroke-width="1" stroke-linejoin="miter" /><polyline points="1332.5,713.5 1332.5,697.5 1336.5,697.5 1336.5,706.3 1337.5,706.3 1337.5,697.5 1338.0,697.5 1338.5,713.5" fill="none" stroke="#ffff00" stroke-width="1" stroke-linejoin="miter" /><polyline points="1359.5,713.5 1359.5,697.5 1360.5,697.5 1360.5,713.5" fill="none" stroke="#ffff00" stroke-width="1" stroke-linejoin="miter" /><polyline points="1375.5,713.5 1375.5,680.0 1378.5,680.0 1378.5,713.5 1379.5,713.5 1379.5,698.4 1382.5,698.4 1382.5,713.5 1383.5,713.5 1383.5,680.0 1385.5,680.0 1385.5,698.4 1386.5,698.4 1386.5,698.4 1388.5,698.4 1388.5,713.5 1389.5,713.5 1389.5,680.0 1390.5,680.0 1390.5,698.4 1390.5,698.4 1390.5,713.5" fill="none" stroke="#ffff00" stroke-width="1" stroke-linejoin="miter" /><polyline points="1399.5,713.5 1399.5,680.0 1402.5,680.0 1402.5,713.5 1403.5,713.5 1403.5,680.0 1404.5,680.0 1404.5,713.5 1405.5,713.5 1405.5,680.0 1407.5,680.0 1407.5,713.5 1408.5,713.5 1408.5,680.0 1410.5,680.0 1410.5,713.5 1411.5,713.5 1411.5,680.0 1413.0,680.0 1412.5,713.5" fill="none" stroke="#ffff00" stroke-width="1" stroke-linejoin="miter" /><polyline points="1425.5,713.5 1425.5,691.7 1429.5,691.7 1429.5,713.5 1430.5,713.5 1430.5,665.0 1432.5,665.0 1432.5,713.5 1433.5,713.5 1433.5,665.0 1435.5,665.0 1435.5,713.5 1436.5,713.5 1436.5,691.7 1438.0,691.7 1438.5,713.5" fill="none" stroke="#ffff00" stroke-width="1" stroke-linejoin="miter" /><polyline points="1440.5,713.5 1440.5,680.0 1442.5,680.0 1442.5,713.5 1443.5,713.5 1443.5,680.0 1445.5,680.0 1445.5,713.5 1446.5,713.5 1446.5,680.0 1448.5,680.0 1448.5,698.4 1449.5,698.4 1449.5,680.0 1450.5,680.0 1450.5,713.5" fill="none" stroke="#ffff00" stroke-width="1" stroke-linejoin="miter" /><polyline points="1456.5,713.5 1456.5,698.4 1458.5,698.4 1458.5,713.5 1459.5,713.5 1459.5,680.0 1461.5,680.0 1461.5,713.5 1462.5,713.5 1462.5,680.0 1464.5,680.0 1464.5,713.5 1465.5,713.5 1465.5,680.0 1468.5,680.0 1468.5,713.5 1469.5,713.5 1469.5,680.0 1470.5,680.0 1470.5,713.5" fill="none" stroke="#ffff00" stroke-width="1" stroke-linejoin="miter" /><polyline points="1514.5,713.5 1514.5,680.0 1517.5,680.0 1517.5,698.4 1518.0,698.4 1518.5,713.5" fill="none" stroke="#ffff00" stroke-width="1" stroke-linejoin="miter" /><polyline points="1520.5,713.5 1520.5,706.3 1522.5,706.3 1522.5,713.5 1523.5,713.5 1523.5,706.3 1524.2,706.3 1524.5,713.5" fill="none" stroke="#ffff00" stroke-width="1" stroke-linejoin="miter" /><polyline points="1529.5,713.5 1529.5,697.5 1531.5,697.5 1531.5,713.5 1531.8,713.5 1531.5,713.5" fill="none" stroke="#ffff00" stroke-width="1" stroke-linejoin="miter" /><polyline points="1565.5,713.5 1565.5,698.4 1567.5,698.4 1567.5,713.5 1568.0,713.5 1568.5,713.5" fill="none" stroke="#ffff00" stroke-width="1" stroke-linejoin="miter" /><polyline points="1574.5,713.5 1574.5,697.5 1575.5,697.5 1575.5,713.5" fill="none" stroke="#ffff00" stroke-width="1" stroke-linejoin="miter" /><polyline points="1582.5,713.5 1582.5,697.5 1586.5,697.5 1586.5,713.5 1588.5,713.5 1588.5,697.5 1589.2,697.5 1589.5,713.5" fill="none" stroke="#ffff00" stroke-width="1" stroke-linejoin="miter" /><polyline points="1614.5,713.5 1614.5,698.4 1615.5,698.4 1615.5,713.5 1617.5,713.5 1617.5,698.4 1619.5,698.4 1619.5,713.5 1620.5,713.5 1620.5,680.0 1624.5,680.0 1624.5,698.4 1626.5,698.4 1626.5,680.0 1630.5,680.0 1630.5,713.5 1630.5,713.5 1630.5,713.5" fill="none" stroke="#ffff00" stroke-width="1" stroke-linejoin="miter" /><polyline points="1634.5,713.5 1634.5,697.5 1635.5,697.5 1635.5,706.3 1637.5,706.3 1637.5,706.3 1640.5,706.3 1640.5,706.3 1640.5,706.3 1640.5,713.5" fill="none" stroke="#ffff00" stroke-width="1" stroke-linejoin="miter" /><polyline points="1644.5,713.5 1644.5,698.4 1646.5,698.4 1646.5,713.5 1647.5,713.5 1647.5,698.4 1648.5,698.4 1648.5,713.5 1649.5,713.5 1649.5,698.4 1651.5,698.4 1651.5,698.4 1652.5,698.4 1652.5,680.0 1654.2,680.0 1654.5,713.5" fill="none" stroke="#ffff00" stroke-width="1" stroke-linejoin="miter" /><polyline points="1662.5,713.5 1662.5,698.4 1664.5,698.4 1664.5,713.5 1665.5,713.5 1665.5,680.0 1669.5,680.0 1669.5,698.4 1670.5,698.4 1670.5,680.0 1674.5,680.0 1674.5,713.5 1676.5,713.5 1676.5,680.0 1676.8,680.0 1676.5,713.5" fill="none" stroke="#ffff00" stroke-width="1" stroke-linejoin="miter" /><polyline points="1679.5,713.5 1679.5,680.0 1681.5,680.0 1681.5,713.5 1683.5,713.5 1683.5,698.4 1687.5,698.4 1687.5,713.5 1688.5,713.5 1688.5,680.0 1691.5,680.0 1691.5,713.5 1693.5,713.5 1693.5,680.0 1697.5,680.0 1697.5,698.4 1698.0,698.4 1698.5,713.5" fill="none" stroke="#ffff00" stroke-width="1" stroke-linejoin="miter" /><polyline points="1705.5,713.5 1705.5,680.0 1707.5,680.0 1707.5,713.5 1708.5,713.5 1708.5,698.4 1710.5,698.4 1710.5,713.5 1711.5,713.5 1711.5,680.0 1713.5,680.0 1713.5,698.4 1714.5,698.4 1714.5,680.0 1715.5,680.0 1715.5,698.4 1717.5,698.4 1717.5,680.0 1719.5,680.0 1719.5,713.5 1721.5,713.5 1721.5,698.4 1724.5,698.4 1724.5,698.4 1725.5,698.4 1725.5,698.4 1726.5,698.4 1726.5,713.5 1727.5,713.5 1727.5,680.0 1728.5,680.0 1728.5,713.5 1729.5,713.5 1729.5,698.4 1732.5,698.4 1732.5,698.4 1734.5,698.4 1734.5,680.0 1735.5,680.0 1735.5,713.5 1735.5,713.5 1735.5,713.5" fill="none" stroke="#ffff00" stroke-width="1" stroke-linejoin="miter" /><polyline points="929.5,713.0 929.5,650.0 930.5,650.0 930.5,713.0" fill="none" stroke="#ffff00" stroke-width="2" stroke-linejoin="miter" /><polyline points="1823.5,713.0 1823.5,681.0 1824.5,681.0 1824.5,713.0" fill="none" stroke="#ffff00" stroke-width="2" stroke-linejoin="miter" /><polyline points="1827.5,713.0 1827.5,697.0 1829.5,697.0 1829.5,713.0" fill="none" stroke="#ffff00" stroke-width="1" stroke-linejoin="miter" /><rect x="677" y="714" width="354" height="1" fill="#00c8c8" opacity="0.7"/><rect x="1101" y="714" width="109" height="1" fill="#00c8c8" opacity="0.7"/><rect x="1258" y="714" width="477" height="1" fill="#00c8c8" opacity="0.7"/><rect x="1820" y="714" width="12" height="1" fill="#00c8c8" opacity="0.7"/><rect x="382" y="829" width="1525" height="1" fill="#00ffff"/><polyline points="382.0,827.5 407.0,827.5 410.0,823.0 413.0,781.0 420.0,780.5 432.0,781.0 439.5,781.5 439.5,785.5 446.0,789.0 450.0,797.0 455.0,812.0 460.0,820.0 465.0,825.0 470.5,825.5 470.5,826.5 475.0,828.0 490.0,828.0 495.5,828.5 495.5,826.5 500.0,824.0 505.5,824.5 505.5,821.5 510.0,818.0 515.5,818.5 515.5,816.5 520.0,813.0 525.5,813.5 525.5,810.5 530.0,808.0 535.5,808.5 535.5,806.5 540.0,804.0 545.5,804.5 545.5,802.5 550.0,800.5 580.0,800.5 585.0,803.0 605.0,804.5 610.0,806.0 615.5,806.5 615.5,807.5 620.5,807.5 620.5,808.5 625.5,808.5 625.5,809.5 630.0,810.0 635.0,812.0 640.5,812.5 640.5,813.5 646.5,813.5 646.5,814.5 651.5,814.5 651.5,815.5 657.5,815.5 657.5,816.5 662.0,817.0 677.0,817.0 680.0,820.0 684.0,825.0 690.0,828.0 1030.0,828.0 1035.5,828.5 1035.5,826.5 1040.0,823.0 1045.5,823.5 1045.5,820.5 1050.5,820.5 1050.5,817.5 1055.5,817.5 1055.5,814.5 1060.0,811.0 1065.5,811.5 1065.5,808.5 1070.5,808.5 1070.5,805.5 1075.5,805.5 1075.5,802.5 1080.0,799.0 1085.5,799.5 1085.5,796.5 1090.5,796.5 1090.5,792.5 1095.0,789.0 1101.0,785.0 1104.0,800.0 1110.0,815.0 1115.5,815.5 1115.5,820.5 1120.0,824.0 1125.5,824.5 1125.5,825.5 1130.5,825.5 1130.5,827.5 1135.0,828.0 1210.0,828.0 1215.5,828.5 1215.5,826.5 1220.0,823.0 1225.5,823.5 1225.5,820.5 1230.5,820.5 1230.5,818.5 1235.5,818.5 1235.5,816.5 1240.0,813.0 1246.5,813.5 1246.5,810.5 1251.5,810.5 1251.5,807.5 1257.0,804.0 1262.0,810.0 1270.0,820.0 1276.5,820.5 1276.5,824.5 1282.0,828.0 1735.0,828.0 1740.0,825.0 1745.0,822.0 1750.0,820.0 1756.0,817.0 1770.0,817.0 1775.0,819.0 1780.0,816.0 1785.5,816.5 1785.5,814.5 1790.0,811.0 1794.0,810.0 1794.0,818.0" fill="none" stroke="#8a7262" stroke-width="1" stroke-linejoin="miter" /><polyline points="382.0,786.0 384.5,782.8 386.5,781.5 390.5,786.8 392.5,785.5 396.5,789.5 400.5,782.8 402.5,785.5 406.0,790.0 407.0,828.5 446.0,828.5 446.5,828.5 447.5,780.5 449.5,778.7 453.5,778.7 457.5,777.0 459.5,778.7 461.5,785.3 464.5,778.7 466.5,785.3 470.5,778.7 474.5,785.3 477.5,777.0 479.5,785.3 483.5,782.0 486.5,784.0 487.5,828.5 677.0,828.5 677.5,828.5 677.5,772.0 680.5,787.0 682.5,779.0 686.5,783.0 689.5,783.0 693.5,783.0 695.5,787.0 698.5,785.0 702.5,783.0 704.5,783.0 707.5,779.0 710.5,783.0 712.5,783.0 716.5,781.0 720.5,781.0 724.5,777.0 726.5,783.0 729.5,783.0 733.5,783.0 736.5,785.0 738.5,781.0 740.5,781.0 743.5,783.0 745.5,783.0 749.5,777.0 752.5,783.0 755.5,777.0 757.5,789.0 759.5,777.0 761.5,781.0 764.5,781.0 767.5,785.0 771.5,783.0 775.5,777.0 778.5,789.0 782.5,785.0 786.5,779.0 788.5,777.0 792.5,787.0 795.5,777.0 798.5,789.0 801.5,781.0 803.5,785.0 806.5,785.0 808.5,777.0 812.5,779.0 816.5,779.0 818.5,787.0 820.5,785.0 823.5,777.0 826.5,789.0 829.5,781.0 831.5,781.0 833.5,783.0 835.5,777.0 837.5,787.0 840.5,783.0 844.5,779.0 847.5,787.0 851.5,783.0 855.5,785.0 859.5,783.0 862.5,787.0 866.5,787.0 868.5,785.0 872.5,781.0 876.5,783.0 880.5,789.0 883.5,783.0 886.5,783.0 888.5,779.0 892.5,783.0 895.5,779.0 899.5,783.0 902.5,781.0 906.5,783.0 909.5,789.0 913.5,789.0 916.5,787.0 919.5,787.0 922.5,777.0 926.5,779.0 930.5,764.0 932.5,789.0 935.5,789.0 938.5,783.0 942.5,781.0 944.5,779.0 948.5,779.0 952.5,785.0 954.5,787.0 957.5,785.0 960.5,785.0 963.5,783.0 965.5,783.0 968.5,789.0 971.5,777.0 974.5,777.0 978.5,779.0 982.5,777.0 986.5,779.0 989.5,789.0 992.5,783.0 996.5,787.0 999.5,783.0 1003.5,783.0 1007.5,785.0 1009.5,779.0 1012.5,777.0 1015.5,777.0 1019.5,783.0 1021.5,779.0 1024.5,779.0 1027.5,787.0 1030.5,786.0 1031.0,828.5 1101.0,828.5 1101.5,828.5 1101.5,781.0 1105.0,779.5 1110.0,781.5 1132.0,781.5 1134.0,785.0 1136.0,781.5 1172.0,781.5 1174.0,784.0 1176.0,781.5 1209.5,781.5 1210.5,828.5 1257.0,828.5 1257.5,828.5 1257.5,779.5 1260.5,778.5 1264.5,784.5 1266.5,788.5 1269.5,788.5 1271.5,782.5 1275.5,784.5 1277.5,782.5 1281.5,788.5 1285.5,780.5 1289.5,784.5 1293.5,782.5 1297.5,786.5 1301.5,786.5 1304.5,784.5 1306.5,784.5 1309.5,784.5 1313.5,780.5 1315.5,784.5 1318.5,778.5 1320.5,782.5 1323.5,784.5 1327.5,784.5 1331.5,784.5 1333.5,784.5 1336.5,778.5 1340.5,782.5 1344.5,778.5 1348.5,784.5 1352.5,786.5 1355.5,784.5 1357.5,784.5 1361.5,778.5 1363.5,784.5 1365.5,784.5 1367.5,778.5 1370.5,790.5 1374.5,780.5 1376.5,784.5 1380.5,788.5 1382.5,786.5 1385.5,782.5 1387.5,784.5 1390.5,784.5 1394.5,784.5 1397.5,786.5 1400.5,780.5 1402.5,784.5 1404.5,780.5 1408.5,784.5 1411.5,784.5 1415.5,786.5 1417.5,786.5 1419.5,784.5 1423.5,784.5 1426.5,784.5 1429.5,782.5 1432.5,767.5 1435.5,784.5 1437.5,780.5 1441.5,786.5 1444.5,782.5 1447.5,790.5 1449.5,786.5 1451.5,784.5 1453.5,788.5 1456.5,784.5 1458.5,782.5 1461.5,778.5 1464.5,784.5 1467.5,778.5 1470.5,788.5 1473.5,784.5 1475.5,780.5 1478.5,778.5 1480.5,780.5 1482.5,790.5 1485.5,788.5 1487.5,780.5 1489.5,782.5 1493.5,784.5 1496.5,784.5 1498.5,784.5 1500.5,786.5 1503.5,778.5 1505.5,778.5 1508.5,790.5 1510.5,784.5 1513.5,788.5 1515.5,780.5 1518.5,786.5 1521.5,790.5 1525.5,786.5 1527.5,790.5 1531.5,784.5 1535.5,782.5 1539.5,790.5 1543.5,788.5 1547.5,786.5 1550.5,778.5 1552.5,784.5 1554.5,778.5 1556.5,778.5 1559.5,780.5 1561.5,784.5 1564.5,784.5 1567.5,784.5 1571.5,784.5 1573.5,788.5 1575.5,784.5 1577.5,778.5 1580.5,778.5 1583.5,786.5 1585.5,782.5 1587.5,786.5 1590.5,784.5 1594.5,780.5 1597.5,788.5 1600.5,790.5 1604.5,784.5 1607.5,784.5 1609.5,788.5 1613.5,788.5 1616.5,784.5 1620.5,790.5 1622.5,780.5 1625.5,784.5 1627.5,782.5 1629.5,782.5 1633.5,786.5 1637.5,784.5 1640.5,784.5 1644.5,784.5 1647.5,786.5 1650.5,784.5 1653.5,784.5 1657.5,782.5 1661.5,784.5 1665.5,786.5 1669.5,790.5 1673.5,778.5 1676.5,780.5 1680.5,788.5 1682.5,784.5 1686.5,782.5 1688.5,784.5 1690.5,784.5 1692.5,788.5 1694.5,788.5 1698.5,784.5 1701.5,780.5 1705.5,786.5 1708.5,778.5 1710.5,788.5 1713.5,790.5 1716.5,778.5 1720.5,790.5 1724.5,784.5 1728.5,786.5 1731.5,778.5 1734.5,787.0 1735.5,828.5 1799.0,828.5 1799.5,828.5 1799.5,740.0 1802.0,760.0 1806.0,764.0 1810.0,765.0 1812.5,777.0 1818.5,772.0 1825.5,772.0 1830.5,773.7 1837.5,773.7 1840.5,772.0 1848.5,775.3 1857.5,772.0 1863.5,770.3 1868.5,772.0 1878.5,777.0 1884.5,773.7 1887.5,767.0 1897.5,772.0 1905.5,770.3" fill="none" stroke="#ffff00" stroke-width="1" stroke-linejoin="miter" /><path d="M435,828h1M437,828h1M443,828h3M520,828h3M573,828h1M587,828h1M593,828h2M641,828h1M686,828h1M688,828h3M693,828h1M696,828h1M720,828h1M725,828h2M729,828h1M760,828h3M771,828h1M802,828h1M807,828h1M817,828h1M821,828h1M827,828h2M835,828h2M846,828h2M849,828h3M908,828h1M919,828h1M936,828h3M940,828h1M947,828h2M963,828h3M990,828h1M993,828h3M1005,828h1M1023,828h1M1105,828h3M1140,828h1M1143,828h3M1153,828h3M1158,828h3M1165,828h1M1169,828h1M1171,828h1M1188,828h2M1196,828h3M1208,828h1M1260,828h1M1262,828h2M1266,828h2M1280,828h1M1295,828h1M1312,828h1M1326,828h2M1348,828h1M1368,828h1M1376,828h2M1392,828h1M1406,828h2M1410,828h3M1416,828h1M1434,828h1M1437,828h3M1443,828h1M1448,828h2M1452,828h2M1520,828h1M1526,828h1M1536,828h2M1541,828h2M1551,828h1M1558,828h1M1571,828h1M1607,828h1M1623,828h1M1643,828h3M1647,828h2M1660,828h2M1694,828h1M1705,828h2M1722,828h1M1724,828h1M1732,828h1M1814,828h2M1821,828h2M1827,828h1M1835,828h1M1842,828h1M1853,828h3M1897,828h1M1906,828h3" stroke="#ff2020" stroke-width="1" transform="translate(0,0.5)"/><rect x="382" y="1002" width="1525" height="1" fill="#00ff00"/><polyline points="685.5,1002.0 685.5,985.0 687.5,981.1 690.5,955.0 691.5,967.5 694.5,970.0 696.5,1002.0 702.5,1002.0 702.5,980.0 705.5,1002.5 707.5,970.0 709.5,985.0 711.5,980.0 714.5,988.8 718.5,988.8 720.5,1002.0 722.5,970.0 724.5,960.0 726.5,1002.0 729.5,983.8 732.5,1002.0 740.5,1002.0 740.5,970.0 742.5,965.0 745.5,975.0 747.5,960.0 750.5,1002.0" fill="none" stroke="#00ff00" stroke-width="1" stroke-linejoin="miter" /><polyline points="789.5,1002.0 792.5,970.0 796.5,970.0 798.5,988.8 801.5,983.8 804.5,986.9 807.5,987.4 810.5,988.8 812.5,995.0 816.5,970.0 820.5,975.0 824.5,975.0 825.5,1002.0" fill="none" stroke="#00ff00" stroke-width="1" stroke-linejoin="miter" /><polyline points="838.5,1002.0 841.5,966.2 844.5,986.0 846.5,1002.0 849.5,980.0 852.5,1002.0 856.5,1002.5 859.5,970.0 862.5,985.0 866.5,983.8 869.5,988.5 872.5,985.0 876.5,1002.0" fill="none" stroke="#00ff00" stroke-width="1" stroke-linejoin="miter" /><polyline points="890.5,1002.0 894.5,970.0 896.5,987.5 899.5,984.9 902.5,980.0 906.5,1002.0 909.5,985.0 910.5,1002.0" fill="none" stroke="#00ff00" stroke-width="1" stroke-linejoin="miter" /><polyline points="921.5,1002.0 921.5,988.8 922.5,1002.0" fill="none" stroke="#00ff00" stroke-width="1" stroke-linejoin="miter" /><polyline points="936.5,1002.0 939.5,988.9 942.5,972.5 946.5,970.0 950.5,985.0 952.5,984.9 955.5,980.0 959.5,1002.0 961.5,993.6 964.5,980.0 966.5,986.2 970.5,980.0 972.5,980.9 975.5,979.1 978.5,975.0 980.5,1002.0 990.5,1002.0 991.5,965.0 994.5,975.4 996.5,968.3 999.5,965.0 1001.5,1002.0" fill="none" stroke="#00ff00" stroke-width="1" stroke-linejoin="miter" /><polyline points="1014.5,1002.0 1015.5,988.8 1018.5,1002.0 1020.5,1002.0 1020.5,988.8 1022.5,1002.0" fill="none" stroke="#00ff00" stroke-width="1" stroke-linejoin="miter" /><polyline points="1106.5,1002.0 1106.5,988.8 1109.5,1002.0 1111.5,1002.0 1111.5,988.8 1112.5,1002.0" fill="none" stroke="#00ff00" stroke-width="1" stroke-linejoin="miter" /><polyline points="1266.5,1002.0 1266.5,995.0 1269.5,987.5 1271.5,967.5 1275.5,965.0 1278.5,1002.0 1281.5,975.0 1285.5,1002.0 1291.5,1002.0 1294.5,988.1 1296.5,970.0 1300.5,977.5 1304.5,980.0 1308.5,986.2 1310.5,1002.0 1324.5,1002.0 1328.5,975.0 1330.5,970.0 1332.5,985.0 1336.5,980.0 1340.5,1002.0" fill="none" stroke="#00ff00" stroke-width="1" stroke-linejoin="miter" /><polyline points="1375.5,1002.0 1376.5,967.5 1379.5,977.2 1381.5,965.8 1384.5,960.0 1387.5,971.8 1390.5,952.5 1392.5,1002.0 1399.5,1002.0 1401.5,965.3 1404.5,918.8 1408.5,923.8 1410.5,1002.5 1412.5,957.5 1415.5,1002.0 1425.5,1002.0 1428.5,980.1 1430.5,940.0 1432.5,948.7 1435.5,932.6 1438.5,923.8 1441.5,960.0 1445.5,1002.0 1449.5,965.0 1452.5,1002.0 1456.5,987.2 1459.5,956.2 1461.5,957.5 1464.5,954.6 1466.5,941.2 1470.5,1002.0" fill="none" stroke="#00ff00" stroke-width="1" stroke-linejoin="miter" /><polyline points="1515.5,1002.0 1518.5,965.0 1521.5,988.8 1524.5,1002.0 1527.5,993.9 1530.5,982.5 1532.5,986.9 1535.5,980.0 1539.5,1002.0 1565.5,1002.0 1568.5,972.9 1570.5,937.5 1573.5,960.9 1576.5,970.0 1579.5,991.1 1581.5,1002.0 1590.5,1002.0 1590.5,995.0 1591.5,1002.0" fill="none" stroke="#00ff00" stroke-width="1" stroke-linejoin="miter" /><polyline points="1618.5,1002.0 1620.5,975.0 1624.5,975.0 1626.5,979.7 1629.5,970.0 1632.5,980.0 1635.5,992.5 1638.5,1002.0 1645.5,1002.0 1648.5,966.2 1651.5,980.0 1654.5,1002.0 1665.5,1002.0 1668.5,987.6 1670.5,970.0 1672.5,977.5 1676.5,957.4 1679.5,932.5 1682.5,1002.0 1685.5,942.5 1688.5,981.4 1690.5,1002.0 1692.5,989.5 1695.5,975.0 1698.5,985.5 1701.5,983.8 1705.5,1002.0 1709.5,970.0 1712.5,974.8 1715.5,966.2 1719.5,1002.0" fill="none" stroke="#00ff00" stroke-width="1" stroke-linejoin="miter" /><polyline points="1715.5,1002.0 1718.5,986.6 1720.5,955.0 1724.5,952.5 1728.5,967.5 1730.5,1002.0" fill="none" stroke="#00ff00" stroke-width="1" stroke-linejoin="miter" /><rect x="382" y="1009" width="25" height="2" fill="#00ff00"/><rect x="382" y="1023" width="25" height="1" fill="#0000ff"/><rect x="446" y="1009" width="42" height="2" fill="#00ff00"/><rect x="446" y="1023" width="42" height="1" fill="#0000ff"/><rect x="677" y="1009" width="354" height="2" fill="#00ff00"/><rect x="677" y="1023" width="354" height="1" fill="#0000ff"/><rect x="1101" y="1009" width="109" height="2" fill="#00ff00"/><rect x="1101" y="1023" width="109" height="1" fill="#0000ff"/><rect x="1257" y="1009" width="478" height="2" fill="#00ff00"/><rect x="1257" y="1023" width="478" height="1" fill="#0000ff"/><rect x="1799" y="1009" width="108" height="2" fill="#00ff00"/><rect x="1799" y="1023" width="108" height="1" fill="#0000ff"/><path d="M692,1023.5h2M696,1023.5h1M708,1023.5h1M712,1023.5h4M718,1023.5h1M727,1023.5h1M732,1023.5h3M738,1023.5h1M745,1023.5h1M749,1023.5h2M754,1023.5h1M758,1023.5h1M783,1023.5h4M797,1023.5h1M809,1023.5h2M812,1023.5h2M821,1023.5h1M824,1023.5h1M836,1023.5h1M846,1023.5h1M863,1023.5h2M869,1023.5h1M876,1023.5h1M888,1023.5h1M895,1023.5h2M906,1023.5h1M909,1023.5h1M920,1023.5h4M926,1023.5h1M949,1023.5h2M968,1023.5h1M981,1023.5h2M989,1023.5h1M995,1023.5h2M999,1023.5h1M1002,1023.5h2M1006,1023.5h1M1010,1023.5h1M1015,1023.5h2M1018,1023.5h1M1020,1023.5h1M1101,1023.5h2M1111,1023.5h1M1260,1023.5h2M1264,1023.5h1M1277,1023.5h4M1282,1023.5h1M1300,1023.5h2M1314,1023.5h1M1319,1023.5h2M1331,1023.5h1M1334,1023.5h1M1339,1023.5h1M1399,1023.5h4M1405,1023.5h8M1425,1023.5h12M1440,1023.5h4M1446,1023.5h6M1462,1023.5h9M1566,1023.5h1M1588,1023.5h1M1621,1023.5h1M1626,1023.5h2M1634,1023.5h1M1638,1023.5h1M1649,1023.5h4M1681,1023.5h2M1686,1023.5h4M1692,1023.5h2M1696,1023.5h2M1705,1023.5h1M1714,1023.5h6M1718,1023.5h8M1726,1023.5h2M1730,1023.5h2M1827,1023.5h2" stroke="#ff0000" stroke-width="6"/><path d="M685,1039h6M692,1039h1M696,1039h1M701,1039h8M712,1039h4M719,1039h1M721,1039h4M726,1039h1M732,1039h3M738,1039h10M749,1039h1M752,1039h2M756,1039h6M783,1039h4M789,1039h10M809,1039h5M815,1039h6M822,1039h2M835,1039h12M856,1039h9M869,1039h1M876,1039h1M880,1039h4M885,1039h12M906,1039h2M910,1039h1M914,1039h1M920,1039h5M926,1039h1M936,1039h15M960,1039h9M981,1039h2M989,1039h9M999,1039h2M1002,1039h6M1010,1039h12M1105,1039h2M1109,1039h4M1260,1039h1M1264,1039h20M1291,1039h11M1314,1039h8M1324,1039h8M1334,1039h2M1339,1039h1M1360,1039h1M1375,1039h16M1399,1039h5M1405,1039h8M1425,1039h12M1440,1039h4M1446,1039h5M1458,1039h14M1514,1039h5M1521,1039h2M1529,1039h2M1566,1039h1M1582,1039h2M1588,1039h2M1614,1039h15M1634,1039h5M1644,1039h9M1662,1039h12M1676,1039h6M1686,1039h3M1692,1039h6M1705,1039h15M1705,1039h11M1718,1039h8M1726,1039h4M1731,1039h2M1822,1039h1M1826,1039h2" stroke="#00ffff" stroke-width="2"/><rect x="445" y="1038" width="2" height="2" fill="#ffff00"/><rect x="675" y="1038" width="2" height="2" fill="#ffff00"/><rect x="1100" y="1038" width="2" height="2" fill="#ffff00"/><rect x="1255" y="1038" width="2" height="2" fill="#ffff00"/><rect x="1798" y="1038" width="2" height="2" fill="#ffff00"/><rect x="1432" y="1035" width="6" height="2" fill="#00ff00"/></g>
<rect x="382" y="1005" width="1525" height="3" fill="#ffffff"/>
<rect x="413" y="57" width="1" height="947" fill="#00ff00"/><rect x="1795" y="57" width="1" height="947" fill="#00ff00"/><rect x="1796" y="1008" width="1" height="39" fill="#ff8070"/>
</svg><div style="position:absolute;left:1907px;top:57px;width:9px;height:990px;background:#f0f0f0"></div><div style="position:absolute;left:1909px;top:58px;width:6px;height:12px;box-sizing:border-box;border:1px solid #b8b8b8;border-radius:2px;background:linear-gradient(90deg,#e8e8e8,#d4d4d4)"></div><div style="position:absolute;left:1910px;top:62px;width:4px;height:4px;border-radius:50%;background:#000"></div><div style="position:absolute;left:1909px;top:72px;width:6px;height:12px;box-sizing:border-box;border:1px solid #b8b8b8;border-radius:2px;background:linear-gradient(90deg,#e8e8e8,#d4d4d4)"></div><div style="position:absolute;left:1910px;top:76px;width:4px;height:4px;border-radius:50%;background:#000"></div><div style="position:absolute;left:1909px;top:86px;width:6px;height:162px;box-sizing:border-box;border:1px solid #b8b8b8;border-radius:2px;background:linear-gradient(90deg,#e8e8e8,#d4d4d4)"></div><div style="position:absolute;left:1910px;top:164px;width:4px;height:4px;border-radius:50%;background:#000"></div><div style="position:absolute;left:1909px;top:250px;width:6px;height:134px;box-sizing:border-box;border:1px solid #b8b8b8;border-radius:2px;background:linear-gradient(90deg,#e8e8e8,#d4d4d4)"></div><div style="position:absolute;left:1910px;top:314px;width:4px;height:4px;border-radius:50%;background:#000"></div><div style="position:absolute;left:1909px;top:392px;width:6px;height:158px;box-sizing:border-box;border:1px solid #b8b8b8;border-radius:2px;background:linear-gradient(90deg,#e8e8e8,#d4d4d4)"></div><div style="position:absolute;left:1910px;top:464px;width:4px;height:4px;border-radius:50%;background:#000"></div><div style="position:absolute;left:1909px;top:556px;width:6px;height:160px;box-sizing:border-box;border:1px solid #b8b8b8;border-radius:2px;background:linear-gradient(90deg,#e8e8e8,#d4d4d4)"></div><div style="position:absolute;left:1910px;top:630px;width:4px;height:4px;border-radius:50%;background:#000"></div><div style="position:absolute;left:1909px;top:720px;width:6px;height:112px;box-sizing:border-box;border:1px solid #b8b8b8;border-radius:2px;background:linear-gradient(90deg,#e8e8e8,#d4d4d4)"></div><div style="position:absolute;left:1910px;top:771px;width:4px;height:4px;border-radius:50%;background:#000"></div><div style="position:absolute;left:1909px;top:840px;width:6px;height:156px;box-sizing:border-box;border:1px solid #b8b8b8;border-radius:2px;background:linear-gradient(90deg,#e8e8e8,#d4d4d4)"></div><div style="position:absolute;left:1910px;top:912px;width:4px;height:4px;border-radius:50%;background:#000"></div><div style="position:absolute;left:1909px;top:1008px;width:6px;height:37px;box-sizing:border-box;border:1px solid #b8b8b8;border-radius:2px;background:linear-gradient(90deg,#e8e8e8,#d4d4d4)"></div><div style="position:absolute;left:1910px;top:1025px;width:4px;height:4px;border-radius:50%;background:#000"></div><div style="position:absolute;left:378px;top:1048px;width:1542px;height:2px;background:#fff"></div>
<div style="position:absolute;left:378px;top:1050px;width:1542px;height:8px;background:linear-gradient(#2e4a70,#4c6e98 20%,#8fb0d4 30%,#6c8cb4 60%,#6888b0)"></div>
<div style="position:absolute;left:385px;top:1045px;width:33px;height:33px;box-sizing:border-box;border-radius:50%;border:1px solid #1a3a60;background:radial-gradient(circle at 50% 30%,#d8e8f4,#7fa4c4 55%,#3a6a9a)"></div>
<div style="position:absolute;left:396px;top:1052px;width:7px;height:6px;background:#e85a1a;border-radius:2px 0 0 0"></div>
<div style="position:absolute;left:404px;top:1053px;width:7px;height:5px;background:#6ab830"></div><div style="position:absolute;left:594px;top:1052px;width:37px;height:8px;border:1px solid #2a3a50;border-radius:3px;background:linear-gradient(#b8cce4,#8aa8cc);box-sizing:border-box"></div><div style="position:absolute;left:635px;top:1052px;width:37px;height:8px;border:1px solid #2a3a50;border-radius:3px;background:linear-gradient(#b8cce4,#8aa8cc);box-sizing:border-box"></div><div style="position:absolute;left:676px;top:1052px;width:37px;height:8px;border:1px solid #2a3a50;border-radius:3px;background:linear-gradient(#b8cce4,#8aa8cc);box-sizing:border-box"></div><div style="position:absolute;left:716px;top:1052px;width:37px;height:8px;border:1px solid #2a3a50;border-radius:3px;background:linear-gradient(#b8cce4,#8aa8cc);box-sizing:border-box"></div><div class="ann" style="left:9px;top:96.8px">информация по топливу</div><div class="ann" style="left:9px;top:133.1px">в баке тепловоза</div><div class="ann" style="left:5px;top:230.5px">информация от</div><div class="ann" style="left:5px;top:266.5px">температурных датчиков</div><div class="ann" style="left:5px;top:302.1px">(воды, масла, топлива,</div><div class="ann" style="left:5px;top:338.1px">наружного воздуха)</div><div class="ann" style="left:10px;top:432.8px">ток тягового генератора</div><div class="ann" style="left:12.5px;top:541.4px">напряжение тягового</div><div class="ann" style="left:12.5px;top:577.4px">генератора, позиция</div><div class="ann" style="left:12.5px;top:613.4px">контролера, обороты</div><div class="ann" style="left:12.5px;top:649.6px">дизеля</div><div class="ann" style="left:3px;top:718.5px">информация по давлению</div><div class="ann" style="left:3px;top:754.1px">масла, топлива,</div><div class="ann" style="left:3px;top:789.8px">питательной магистрали</div><div class="ann" style="left:3px;top:825.3px">и наддува воздуха</div><div class="ann" style="left:4px;top:902.2px">скорость от ДПС и GPS</div><div class="ann" style="left:17px;top:1008.1px">дискретные сигналы</div><svg style="position:absolute;left:0;top:0" width="378" height="1058"><path d="M376,92 C370,92 369,95 369,100 L369,151 C369,156 367,158 365,158 C367,158 369,160 369,165 L369,218 C369,223 370,226 376,226" fill="none" stroke="#3a3a3a" stroke-width="1.3"/><path d="M374,251.3 C369.7,251.3 368.7,254.3 368.7,259.3 L368.7,298.7 C368.7,303.7 366.7,305.7 363.8,305.7 C366.7,305.7 368.7,307.7 368.7,312.7 L368.7,353.6 C368.7,358.6 369.7,361.6 374,361.6" fill="none" stroke="#3a3a3a" stroke-width="1.3"/><path d="M376,395 C370,395 369,398 369,403 L369,451 C369,456 367,458 364,458 C367,458 369,460 369,465 L369,518 C369,523 370,526 376,526" fill="none" stroke="#3a3a3a" stroke-width="1.3"/><path d="M373,560 C368.7,560 367.7,563 367.7,568 L367.7,625 C367.7,630 365.7,632 362,632 C365.7,632 367.7,634 367.7,639 L367.7,703 C367.7,708 368.7,711 373,711" fill="none" stroke="#3a3a3a" stroke-width="1.3"/><path d="M373,719 C368,719 367,722 367,727 L367,763 C367,768 365,770 360,770 C365,770 367,772 367,777 L367,817 C367,822 368,825 373,825" fill="none" stroke="#3a3a3a" stroke-width="1.3"/><path d="M373,842 C368.7,842 367.7,845 367.7,850 L367.7,910.5 C367.7,915.5 365.7,917.5 362,917.5 C365.7,917.5 367.7,919.5 367.7,924.5 L367.7,992 C367.7,997 368.7,1000 373,1000" fill="none" stroke="#3a3a3a" stroke-width="1.3"/><path d="M371.8,1006.5 C366.8,1006.5 365.8,1009.5 365.8,1014.5 L365.8,1021 C365.8,1026 363.8,1028 359.5,1028 C363.8,1028 365.8,1030 365.8,1035 L365.8,1047 C365.8,1052 366.8,1055 371.8,1055" fill="none" stroke="#3a3a3a" stroke-width="1.3"/></svg><div style="position:absolute;left:378px;top:57px;width:3px;height:990px;background:#ececec"></div><div style="position:absolute;left:381px;top:57px;width:1px;height:990px;background:#ffffff"></div><div style="position:absolute;left:378px;top:90px;width:3px;height:138.5px;background:#fdfdfd"></div><div style="position:absolute;left:378px;top:249.3px;width:3px;height:114.80000000000001px;background:#fdfdfd"></div><div style="position:absolute;left:378px;top:393px;width:3px;height:135.5px;background:#fdfdfd"></div><div style="position:absolute;left:378px;top:558px;width:3px;height:155.5px;background:#fdfdfd"></div><div style="position:absolute;left:378px;top:717px;width:3px;height:110.5px;background:#fdfdfd"></div><div style="position:absolute;left:378px;top:840px;width:3px;height:162.5px;background:#fdfdfd"></div>
</body></html>
